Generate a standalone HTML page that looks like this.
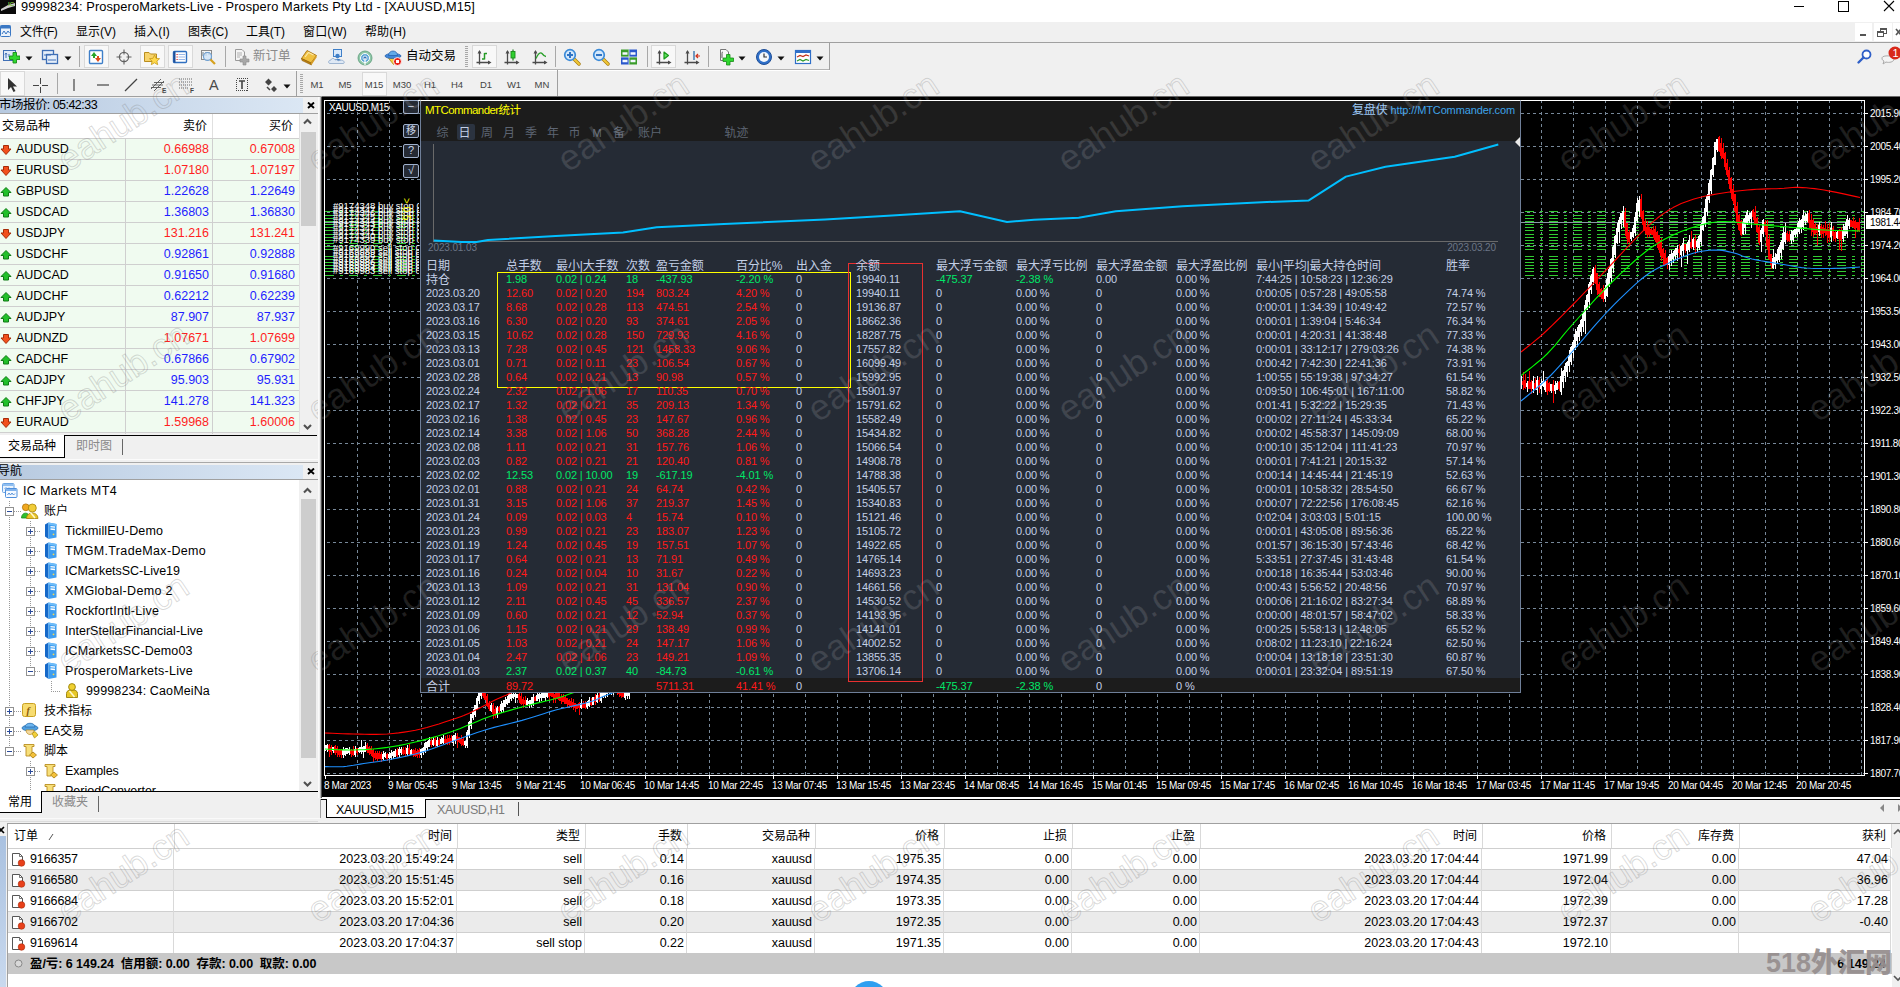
<!DOCTYPE html>
<html lang="zh-CN"><head><meta charset="utf-8"><title>MT4</title><style>
html,body{margin:0;padding:0;background:#f0f0f0;}
#root{position:relative;width:1900px;height:987px;overflow:hidden;background:#f0f0f0;font-family:"Liberation Sans","Noto Sans CJK SC",sans-serif;font-size:12px;}
.b{position:absolute;display:block;}
.t{position:absolute;white-space:pre;font-family:"Liberation Sans","Noto Sans CJK SC",sans-serif;font-size:12px;}
.ui{font-size:12.5px;}
.ar{font-size:11px;letter-spacing:-0.12px;}
.ax{font-size:10px;}
.wml,.wmd{font-size:36px;line-height:44px;width:160px;text-align:center;transform:rotate(-33.5deg);}
.wml{color:transparent;-webkit-text-stroke:1px rgba(120,120,120,0.28);}
.wmd{color:rgba(255,255,255,0.12);}
</style></head>
<body><div id="root">
<div class="b" style="left:0px;top:0px;width:1900px;height:22px;background:#fff"></div>
<svg class="b" style="left:0px;top:0px;" width="16" height="14" viewBox="0 0 16 14"><rect x="0" y="0" width="16" height="14" fill="#0a0a0a"/><path d="M1 9 L8 5 L15 3 L15 6 L8 8 L1 11Z" fill="#cfcfcf"/><text x="8" y="5.5" font-family="Liberation Sans,sans-serif" font-size="6" font-weight="bold" fill="#7fbf3f">IC</text></svg>
<div class="t ui" style="left:21px;top:-1px;font-size:12.8px;line-height:16px;color:#000;letter-spacing:0.12px;">99998234: ProsperoMarkets-Live - Prospero Markets Pty Ltd - [XAUUSD,M15]</div>
<svg class="b" style="left:1790px;top:0px;" width="110" height="14" viewBox="0 0 110 14"><path d="M4 6.5H14" stroke="#000" stroke-width="1"/><rect x="48.5" y="1.5" width="10" height="10" fill="none" stroke="#000" stroke-width="1"/><path d="M94 1L104 11M104 1L94 11" stroke="#000" stroke-width="1.1"/></svg>
<div class="b" style="left:0px;top:22px;width:1900px;height:20px;background:#f0f0f0"></div>
<svg class="b" style="left:0px;top:24px;" width="12" height="14" viewBox="0 0 12 14"><rect x="0.5" y="1.5" width="10" height="11" rx="1" fill="#eaf2fb" stroke="#3b78c4"/><rect x="0.5" y="1.5" width="10" height="3" fill="#3b78c4"/><path d="M2 10L4 7L6 10L8 7L9.5 9" fill="none" stroke="#3b78c4" stroke-width="1"/></svg>
<div class="t ui" style="left:20px;top:24px;font-size:12px;line-height:17px;color:#000;letter-spacing:-0.37px;">文件(F)</div>
<div class="t ui" style="left:76px;top:24px;font-size:12px;line-height:17px;color:#000;letter-spacing:0.00px;">显示(V)</div>
<div class="t ui" style="left:134px;top:24px;font-size:12px;line-height:17px;color:#000;letter-spacing:0.13px;">插入(I)</div>
<div class="t ui" style="left:188px;top:24px;font-size:12px;line-height:17px;color:#000;letter-spacing:-0.13px;">图表(C)</div>
<div class="t ui" style="left:246px;top:24px;font-size:12px;line-height:17px;color:#000;letter-spacing:-0.07px;">工具(T)</div>
<div class="t ui" style="left:303px;top:24px;font-size:12px;line-height:17px;color:#000;letter-spacing:0.13px;">窗口(W)</div>
<div class="t ui" style="left:365px;top:24px;font-size:12px;line-height:17px;color:#000;letter-spacing:0.07px;">帮助(H)</div>
<div class="b" style="left:1855px;top:23px;width:17px;height:18px;background:#fff"></div>
<div class="b" style="left:1874px;top:23px;width:18px;height:18px;background:#fff"></div>
<div class="b" style="left:1893px;top:23px;width:7px;height:18px;background:#fff"></div>
<svg class="b" style="left:1855px;top:23px;" width="45" height="18" viewBox="0 0 45 18"><rect x="5" y="11" width="6" height="2" fill="#555"/><rect x="25.5" y="5.5" width="6" height="5" fill="none" stroke="#555"/><rect x="25" y="5" width="7" height="2" fill="#555"/><rect x="22.500" y="8.5" width="6" height="5" fill="#fff" stroke="#555"/><rect x="22" y="8" width="7" height="2" fill="#555"/><path d="M41 6L46 12M46 6L41 12" stroke="#555" stroke-width="1.6"/></svg>
<div class="b" style="left:0px;top:42px;width:1900px;height:1px;background:#a0a0a0"></div>
<div class="b" style="left:0px;top:43px;width:1900px;height:54px;background:#f0f0f0"></div>
<div class="b" style="left:0px;top:69px;width:830px;height:1px;background:#b4b4b4"></div>
<div class="b" style="left:0px;top:70px;width:830px;height:1px;background:#fff"></div>
<div class="b" style="left:829px;top:43px;width:1px;height:27px;background:#a0a0a0"></div>
<div class="b" style="left:0px;top:96px;width:558px;height:1px;background:#a0a0a0"></div>
<div class="b" style="left:557px;top:70px;width:1px;height:27px;background:#a0a0a0"></div>
<div class="b" style="left:84px;top:45px;width:25px;height:23px;background:#f8f8f8;border:1px solid #d9d9d9;box-sizing:border-box;"></div>
<div class="b" style="left:140px;top:45px;width:25px;height:23px;background:#f8f8f8;border:1px solid #d9d9d9;box-sizing:border-box;"></div>
<div class="b" style="left:168px;top:45px;width:25px;height:23px;background:#f8f8f8;border:1px solid #d9d9d9;box-sizing:border-box;"></div>
<div class="b" style="left:472px;top:45px;width:25px;height:23px;background:#f8f8f8;border:1px solid #d9d9d9;box-sizing:border-box;"></div>
<div class="b" style="left:651px;top:45px;width:25px;height:23px;background:#f8f8f8;border:1px solid #d9d9d9;box-sizing:border-box;"></div>
<div class="b" style="left:79px;top:46px;width:1px;height:21px;background:#a8a8a8"></div>
<div class="b" style="left:225px;top:46px;width:1px;height:21px;background:#a8a8a8"></div>
<div class="b" style="left:555px;top:46px;width:1px;height:21px;background:#a8a8a8"></div>
<div class="b" style="left:647px;top:46px;width:1px;height:21px;background:#a8a8a8"></div>
<div class="b" style="left:708px;top:46px;width:1px;height:21px;background:#a8a8a8"></div>
<div class="b" style="left:465px;top:46px;width:3px;height:21px;background:repeating-linear-gradient(#a8a8a8 0 1px,#f0f0f0 1px 2px)"></div>
<svg class="b" style="left:25px;top:56px;" width="8" height="5" viewBox="0 0 8 5"><path d="M0.5 0.5H7.5L4 4.5Z" fill="#111"/></svg>
<svg class="b" style="left:64px;top:56px;" width="8" height="5" viewBox="0 0 8 5"><path d="M0.5 0.5H7.5L4 4.5Z" fill="#111"/></svg>
<svg class="b" style="left:738px;top:56px;" width="8" height="5" viewBox="0 0 8 5"><path d="M0.5 0.5H7.5L4 4.5Z" fill="#111"/></svg>
<svg class="b" style="left:777px;top:56px;" width="8" height="5" viewBox="0 0 8 5"><path d="M0.5 0.5H7.5L4 4.5Z" fill="#111"/></svg>
<svg class="b" style="left:816px;top:56px;" width="8" height="5" viewBox="0 0 8 5"><path d="M0.5 0.5H7.5L4 4.5Z" fill="#111"/></svg>
<svg class="b" style="left:2px;top:48px;" width="18" height="18" viewBox="0 0 18 18"><rect x="1.5" y="2.5" width="12" height="10" fill="#dfeaf8" stroke="#3f6fb5"/><path d="M4 10V5M4 5L3 6.500M4 5L5 6.500M7 9V6" stroke="#3f6fb5" fill="none"/><path d="M11 4.500H14.500V8H18V11.500H14.500V15H11V11.500H7.500V8H11Z" fill="#2fd82f" stroke="#168a16" stroke-width="0.9"/></svg>
<svg class="b" style="left:41px;top:48px;" width="18" height="18" viewBox="0 0 18 18"><rect x="1.5" y="2.5" width="11" height="9" fill="#e6effa" stroke="#3f6fb5" stroke-width="1.3"/><rect x="5.500" y="6.500" width="11" height="9" fill="#e6effa" stroke="#3f6fb5" stroke-width="1.3"/><path d="M3 7H10M7 12H15" stroke="#3f6fb5" stroke-width="1"/></svg>
<svg class="b" style="left:87px;top:48px;" width="18" height="18" viewBox="0 0 18 18"><rect x="2.500" y="2.500" width="13" height="13" rx="1" fill="#fff" stroke="#3f7fc8" stroke-width="1.4"/><path d="M7 4L10 8H8V10H6V8H4Z" fill="#2aa52a"/><path d="M11 14L8 10H10V8H12V10H14Z" fill="#e04a1a"/></svg>
<svg class="b" style="left:115px;top:48px;" width="18" height="18" viewBox="0 0 18 18"><circle cx="9" cy="9" r="4.600" fill="none" stroke="#606060" stroke-width="1.200"/><path d="M9 1.500V6.500M9 11.500V16.500M1.500 9H6.500M11.500 9H16.500" stroke="#606060" stroke-width="1.100"/></svg>
<svg class="b" style="left:143px;top:48px;" width="18" height="18" viewBox="0 0 18 18"><path d="M1.500 4.500H6L7.500 6H13.500V13.500H1.500Z" fill="#f7d36a" stroke="#b98d1f"/><path d="M11.500 7L13 10.300L16.600 10.700L13.900 13.100L14.700 16.700L11.500 14.800L8.300 16.700L9.100 13.100L6.400 10.700L10 10.300Z" fill="#ffd84a" stroke="#c79a1a" stroke-width="0.800"/></svg>
<svg class="b" style="left:171px;top:48px;" width="18" height="18" viewBox="0 0 18 18"><rect x="2.500" y="3.500" width="13" height="11" rx="1" fill="#fff" stroke="#2f6fc0" stroke-width="1.400"/><rect x="2.500" y="3.500" width="2" height="11" fill="#1f4f98"/><path d="M7.500 6.500H14M7.500 9H14M7.500 11.500H14" stroke="#9ab8e8" stroke-width="1"/><path d="M5.500 6.500h1.200M5.500 9h1.200M5.500 11.500h1.200" stroke="#e02020" stroke-width="1.200"/></svg>
<svg class="b" style="left:199px;top:48px;" width="18" height="18" viewBox="0 0 18 18"><rect x="2.500" y="2.500" width="10" height="9" fill="#f4f4f4" stroke="#8a8a8a"/><path d="M4 4V8M7 4V8M10 4V7" stroke="#6a7a8a"/><circle cx="8.500" cy="8.500" r="4" fill="#cfe3f7" fill-opacity="0.800" stroke="#6f9fd0" stroke-width="1.200"/><path d="M11.500 11.500L16 16" stroke="#d6a11e" stroke-width="2.200"/></svg>
<svg class="b" style="left:232px;top:48px;" width="18" height="18" viewBox="0 0 18 18"><path d="M3.500 1.500H10L12.500 4V12.500H3.500Z" fill="#f4f4f4" stroke="#9a9a9a"/><path d="M5 5H10M5 7H10M5 9H8" stroke="#b0b0b0"/><path d="M11 8H14V11H17V14H14V17H11V14H8V11H11Z" fill="#a8a8a8" stroke="#8a8a8a" stroke-width="0.600"/></svg>
<div class="t ui" style="left:253px;top:48px;color:#8a8a8a;line-height:17px;font-size:12.500px">新订单</div>
<svg class="b" style="left:300px;top:48px;" width="18" height="18" viewBox="0 0 18 18"><path d="M1.500 10.500L7 2.500L16.500 7.500L11 15Z" fill="#f0c040" stroke="#a8700c" stroke-width="0.900"/><path d="M1.500 10.500L11 15L11.500 17L2 12.500Z" fill="#c08410" stroke="#8a5a08" stroke-width="0.600"/><path d="M11 15L16.500 7.500L16.500 9.500L11.500 17Z" fill="#d89c20"/><path d="M5 9L8.500 4.500L13.500 7" fill="none" stroke="#fbe9a8" stroke-width="1.200"/></svg>
<svg class="b" style="left:328px;top:48px;" width="18" height="18" viewBox="0 0 18 18"><rect x="5.500" y="1.500" width="8" height="7" fill="#d9e9fb" stroke="#3f7fc8"/><circle cx="9.500" cy="8" r="2.200" fill="#3f7fc8"/><path d="M6 13C6 10 13 10 13 13Z" fill="#3f7fc8"/><path d="M2 15.500C0 15.500 0 12 3 12C3.500 10 6.500 10 7 12C9 11 10 12.500 10 13C12 11.500 16 12 16 14C17 15.500 15 15.500 15 15.500Z" fill="#dfe9f5" stroke="#8aa6c8" stroke-width="0.800"/></svg>
<svg class="b" style="left:356px;top:48px;" width="18" height="18" viewBox="0 0 18 18"><circle cx="9" cy="10" r="7" fill="#8fc7a8" stroke="#5a9a78" stroke-width="0.800"/><circle cx="9" cy="10" r="4.500" fill="#5fa7d8" stroke="#fff" stroke-width="1"/><circle cx="9" cy="10" r="2" fill="#2f6fb8" stroke="#fff" stroke-width="0.800"/><path d="M9 10V17" stroke="#fff" stroke-width="1.200"/></svg>
<svg class="b" style="left:384px;top:48px;" width="18" height="18" viewBox="0 0 18 18"><path d="M4 9.500H14L9.500 16.500Z" fill="#f4d040" stroke="#b08a10" stroke-width="0.800"/><ellipse cx="9" cy="8" rx="8" ry="2.600" fill="#3f86d8" stroke="#1f5aa8" stroke-width="0.700"/><path d="M4.500 7.500C4.500 1.500 13.500 1.500 13.500 7.500Z" fill="#62aae8" stroke="#1f5aa8" stroke-width="0.700"/><circle cx="13.500" cy="13.500" r="4" fill="#e8241a" stroke="#fff" stroke-width="0.900"/><rect x="12" y="12" width="3" height="3" fill="#fff"/></svg>
<div class="t ui" style="left:406px;top:48px;color:#000;line-height:17px;font-size:12.500px">自动交易</div>
<svg class="b" style="left:475px;top:48px;" width="18" height="18" viewBox="0 0 18 18"><path d="M4.500 3V16.500M1.500 14.500H15" fill="none" stroke="#4a4a4a" stroke-width="1.300"/><path d="M2.500 5.500L4.500 2L6.500 5.500Z M13 12.500L16.500 14.500L13 16.500Z" fill="#4a4a4a"/><path d="M9.500 5V11.500M9.500 5.500H12M7 11H9.500" fill="none" stroke="#259a25" stroke-width="1.500"/></svg>
<svg class="b" style="left:503px;top:48px;" width="18" height="18" viewBox="0 0 18 18"><path d="M4.500 3V16.500M1.500 14.500H15" fill="none" stroke="#4a4a4a" stroke-width="1.300"/><path d="M2.500 5.500L4.500 2L6.500 5.500Z M13 12.500L16.500 14.500L13 16.500Z" fill="#4a4a4a"/><path d="M10 1.500V12.500" stroke="#1a7a1a" stroke-width="1.200"/><rect x="8" y="3.500" width="4" height="6.500" fill="#2fd02f" stroke="#1a8a1a" stroke-width="0.900"/></svg>
<svg class="b" style="left:531px;top:48px;" width="18" height="18" viewBox="0 0 18 18"><path d="M4.500 3V16.500M1.500 14.500H15" fill="none" stroke="#4a4a4a" stroke-width="1.300"/><path d="M2.500 5.500L4.500 2L6.500 5.500Z M13 12.500L16.500 14.500L13 16.500Z" fill="#4a4a4a"/><path d="M5 10.500C7 6 9.500 3.500 11 5.500S13.500 8.500 15 8.500" fill="none" stroke="#2aa02a" stroke-width="1.300"/></svg>
<svg class="b" style="left:563px;top:48px;" width="18" height="18" viewBox="0 0 18 18"><path d="M11 11L16 16" stroke="#a87c10" stroke-width="3.400" stroke-linecap="round"/><path d="M11 11L16 16" stroke="#f0c838" stroke-width="2" stroke-linecap="round"/><circle cx="7" cy="7" r="5.300" fill="#d4e8fb" stroke="#3a8ad8" stroke-width="1.700"/><path d="M4 7H10 M7 4V10" stroke="#2f74c4" stroke-width="2"/></svg>
<svg class="b" style="left:592px;top:48px;" width="18" height="18" viewBox="0 0 18 18"><path d="M11 11L16 16" stroke="#a87c10" stroke-width="3.400" stroke-linecap="round"/><path d="M11 11L16 16" stroke="#f0c838" stroke-width="2" stroke-linecap="round"/><circle cx="7" cy="7" r="5.300" fill="#d4e8fb" stroke="#3a8ad8" stroke-width="1.700"/><path d="M4 7H10" stroke="#2f74c4" stroke-width="2"/></svg>
<svg class="b" style="left:620px;top:48px;" width="18" height="18" viewBox="0 0 18 18"><rect x="1" y="1.500" width="8" height="7.500" fill="#3a9c2a"/><rect x="9" y="1.500" width="8" height="7.500" fill="#2a58cc"/><rect x="1" y="9" width="8" height="7.500" fill="#2a58cc"/><rect x="9" y="9" width="8" height="7.500" fill="#3a9c2a"/><path d="M2.500 5.500H7.500M10.500 5.500H15.500M2.500 13H7.500M10.500 13H15.500" stroke="#f4f8ff" stroke-width="2.600"/><path d="M1 9H17M9 1.500V16.500" stroke="#e8eef8" stroke-width="0.800"/></svg>
<svg class="b" style="left:655px;top:48px;" width="18" height="18" viewBox="0 0 18 18"><path d="M4.500 3V16.500M1.500 14.500H15" fill="none" stroke="#4a4a4a" stroke-width="1.300"/><path d="M2.500 5.500L4.500 2L6.500 5.500Z M13 12.500L16.500 14.500L13 16.500Z" fill="#4a4a4a"/><path d="M9 4L13.500 7.500L9 11Z" fill="#5fe05f" stroke="#1a9a1a" stroke-width="1.200" stroke-linejoin="round"/></svg>
<svg class="b" style="left:683px;top:48px;" width="18" height="18" viewBox="0 0 18 18"><path d="M4.500 3V16.500M1.500 14.500H15" fill="none" stroke="#4a4a4a" stroke-width="1.300"/><path d="M2.500 5.500L4.500 2L6.500 5.500Z M13 12.500L16.500 14.500L13 16.500Z" fill="#4a4a4a"/><path d="M11 3V12" stroke="#2a6aa8" stroke-width="1.300"/><path d="M17 8H13M15 6L13 8L15 10" stroke="#d0301a" stroke-width="1.200" fill="none"/></svg>
<svg class="b" style="left:717px;top:48px;" width="18" height="18" viewBox="0 0 18 18"><path d="M3.500 1.500H9L11.500 4V12.500H3.500Z" fill="#f8f8f8" stroke="#777"/><path d="M6 4C5 4 5 5 5 6V10" fill="none" stroke="#555"/><path d="M9.500 6.500H13V10H16.500V13.500H13V17H9.500V13.500H6V10H9.500Z" fill="#2fd82f" stroke="#168a16" stroke-width="0.800"/></svg>
<svg class="b" style="left:755px;top:48px;" width="18" height="18" viewBox="0 0 18 18"><circle cx="9" cy="9" r="7.500" fill="#2f6fc8" stroke="#1f4f98"/><circle cx="9" cy="9" r="5" fill="#f4f8fc"/><path d="M9 5.500V9H12" stroke="#333" stroke-width="1.200" fill="none"/></svg>
<svg class="b" style="left:794px;top:48px;" width="18" height="18" viewBox="0 0 18 18"><rect x="1.500" y="2.500" width="15" height="13" fill="#fff" stroke="#2f6fc8" stroke-width="1.200"/><rect x="1.500" y="2.500" width="15" height="2.500" fill="#2f6fc8"/><path d="M3 9L6 7.500L9 8.500L12 7L15 8" fill="none" stroke="#c0301a" stroke-width="1.200"/><path d="M3 13L6 11.500L9 13L12 11.500L15 12.500" fill="none" stroke="#2a9a2a" stroke-width="1.200"/></svg>
<svg class="b" style="left:1856px;top:48px;" width="18" height="18" viewBox="0 0 18 18"><circle cx="10.500" cy="6.500" r="4" fill="#fff" stroke="#2f5fc8" stroke-width="1.800"/><path d="M7.500 9.500L2.500 14.500" stroke="#2f5fc8" stroke-width="2.400" stroke-linecap="round"/></svg>
<svg class="b" style="left:1880px;top:44px;" width="20" height="24" viewBox="0 0 20 24"><path d="M2 14C2 11 14 11 14 15C14 18 9 19 6 18L3 20L4 17C2.500 16.500 2 15.500 2 14Z" fill="#f4f4f4" stroke="#aaa"/><circle cx="15" cy="9" r="6.500" fill="#d8281a"/><text x="12.500" y="13" font-family="Liberation Sans,sans-serif" font-size="11" fill="#fff">1</text></svg>
<div class="b" style="left:0px;top:71px;width:25px;height:25px;background:#f8f8f8;border:1px solid #d9d9d9;box-sizing:border-box;"></div>
<div class="b" style="left:362px;top:72px;width:25px;height:24px;background:#f8f8f8;border:1px solid #d9d9d9;box-sizing:border-box;"></div>
<div class="b" style="left:57px;top:73px;width:1px;height:21px;background:#a8a8a8"></div>
<div class="b" style="left:296px;top:71px;width:1px;height:25px;background:#a0a0a0"></div>
<div class="b" style="left:300px;top:74px;width:3px;height:19px;background:repeating-linear-gradient(#a8a8a8 0 1px,#f0f0f0 1px 2px)"></div>
<svg class="b" style="left:3px;top:76px;" width="18" height="18" viewBox="0 0 18 18"><path d="M5 2V14L8 11L10.500 16L12.500 15L10 10.500H14Z" fill="#333"/></svg>
<svg class="b" style="left:31px;top:76px;" width="18" height="18" viewBox="0 0 18 18"><path d="M9.500 2V8M9.500 11V17M2 9.500H8M11 9.500H17" stroke="#444" stroke-width="1" shape-rendering="crispEdges"/></svg>
<svg class="b" style="left:65px;top:76px;" width="18" height="18" viewBox="0 0 18 18"><path d="M9 3V15" stroke="#444" stroke-width="1.200"/></svg>
<svg class="b" style="left:94px;top:76px;" width="18" height="18" viewBox="0 0 18 18"><path d="M3 9H15" stroke="#444" stroke-width="1.200"/></svg>
<svg class="b" style="left:122px;top:76px;" width="18" height="18" viewBox="0 0 18 18"><path d="M3 15L15 3" stroke="#444" stroke-width="1.200"/></svg>
<svg class="b" style="left:150px;top:76px;" width="18" height="18" viewBox="0 0 18 18"><path d="M1 13L11 3M4 15L14 5M2 9H13M4 6.500H14M1 11.500H11" stroke="#555" stroke-width="0.900"/><text x="12" y="17" font-family="Liberation Sans,sans-serif" font-size="6.500" font-weight="bold" fill="#444">E</text></svg>
<svg class="b" style="left:178px;top:76px;" width="18" height="18" viewBox="0 0 18 18"><path d="M1 3H14M1 6H14M1 9H14M1 12H11" stroke="#666" stroke-width="1" stroke-dasharray="1 1"/><text x="12" y="17" font-family="Liberation Sans,sans-serif" font-size="6.500" font-weight="bold" fill="#444">F</text></svg>
<div class="t" style="left:209px;top:76px;font-size:14.5px;line-height:18px;color:#4a4a4a">A</div>
<svg class="b" style="left:233px;top:76px;" width="18" height="18" viewBox="0 0 18 18"><rect x="3.500" y="2.500" width="11" height="12" fill="none" stroke="#444" stroke-dasharray="1 1" shape-rendering="crispEdges"/><path d="M6 5H12M9 5V13" stroke="#444" stroke-width="1.600"/></svg>
<svg class="b" style="left:262px;top:76px;" width="18" height="18" viewBox="0 0 18 18"><path d="M3 6L6.500 2.500L10 6L6.500 9.500Z M9 13L12 10L15 13L12 16Z" fill="#444"/><path d="M5 11L8 14" stroke="#444" stroke-width="1.500"/></svg>
<svg class="b" style="left:283px;top:84px;" width="8" height="5" viewBox="0 0 8 5"><path d="M0.500 0.500H7.500L4 4.500Z" fill="#111"/></svg>
<div class="t" style="left:302px;top:78px;width:30px;text-align:center;font-size:9.5px;line-height:14px;color:#444">M1</div>
<div class="t" style="left:330px;top:78px;width:30px;text-align:center;font-size:9.5px;line-height:14px;color:#444">M5</div>
<div class="t" style="left:359px;top:78px;width:30px;text-align:center;font-size:9.5px;line-height:14px;color:#444">M15</div>
<div class="t" style="left:387px;top:78px;width:30px;text-align:center;font-size:9.5px;line-height:14px;color:#444">M30</div>
<div class="t" style="left:415px;top:78px;width:30px;text-align:center;font-size:9.5px;line-height:14px;color:#444">H1</div>
<div class="t" style="left:442px;top:78px;width:30px;text-align:center;font-size:9.5px;line-height:14px;color:#444">H4</div>
<div class="t" style="left:471px;top:78px;width:30px;text-align:center;font-size:9.5px;line-height:14px;color:#444">D1</div>
<div class="t" style="left:499px;top:78px;width:30px;text-align:center;font-size:9.5px;line-height:14px;color:#444">W1</div>
<div class="t" style="left:527px;top:78px;width:30px;text-align:center;font-size:9.5px;line-height:14px;color:#444">MN</div>
<div class="b" style="left:0px;top:97px;width:322px;height:725px;background:#f0f0f0"></div>
<div class="b" style="left:0px;top:98px;width:303px;height:15px;background:linear-gradient(90deg,#b7c9df 0%,#c6d6e9 40%,#dbe7f4 100%)"></div>
<div class="t ui" style="left:-1px;top:97px;line-height:16px;color:#000;letter-spacing:-0.54px;">市场报价: 05:42:33</div>
<svg class="b" style="left:307px;top:102px;" width="8" height="7" viewBox="0 0 8 7"><path d="M1 0.500L7 6M7 0.500L1 6" stroke="#000" stroke-width="1.900"/></svg>
<div class="b" style="left:0px;top:113px;width:318px;height:1px;background:#a0a0a0"></div>
<div class="b" style="left:0px;top:114px;width:299px;height:320px;background:#fff"></div>
<div class="t ui" style="left:2px;top:118px;line-height:17px;color:#000;font-size:12px">交易品种</div>
<div class="t ui" style="left:126px;top:118px;width:81px;text-align:right;line-height:17px;color:#000;font-size:12px">卖价</div>
<div class="t ui" style="left:213px;top:118px;width:80px;text-align:right;line-height:17px;color:#000;font-size:12px">买价</div>
<div class="b" style="left:212px;top:114px;width:1px;height:24px;background:#e0e0e0"></div>
<div class="b" style="left:0px;top:138px;width:299px;height:296px;background:#f0fbf0"></div>
<div class="b" style="left:0px;top:138px;width:299px;height:1px;background:#cfcfcf"></div>
<svg class="b" style="left:0px;top:145px;" width="12" height="10" viewBox="0 0 12 10"><path d="M6 9.500L11 4H8.500V0.500H3.500V4H1Z" fill="#f2501c" stroke="#a62c08" stroke-width="1" stroke-linejoin="round"/></svg>
<div class="t ui" style="left:16px;top:140px;line-height:18px;color:#000">AUDUSD</div>
<div class="t ui" style="left:126px;top:140px;width:83px;text-align:right;line-height:18px;color:#ff1f1f">0.66988</div>
<div class="t ui" style="left:213px;top:140px;width:82px;text-align:right;line-height:18px;color:#ff1f1f">0.67008</div>
<div class="b" style="left:0px;top:159px;width:299px;height:1px;background:#cfcfcf"></div>
<svg class="b" style="left:0px;top:166px;" width="12" height="10" viewBox="0 0 12 10"><path d="M6 9.500L11 4H8.500V0.500H3.500V4H1Z" fill="#f2501c" stroke="#a62c08" stroke-width="1" stroke-linejoin="round"/></svg>
<div class="t ui" style="left:16px;top:161px;line-height:18px;color:#000">EURUSD</div>
<div class="t ui" style="left:126px;top:161px;width:83px;text-align:right;line-height:18px;color:#ff1f1f">1.07180</div>
<div class="t ui" style="left:213px;top:161px;width:82px;text-align:right;line-height:18px;color:#ff1f1f">1.07197</div>
<div class="b" style="left:0px;top:180px;width:299px;height:1px;background:#cfcfcf"></div>
<svg class="b" style="left:0px;top:187px;" width="12" height="10" viewBox="0 0 12 10"><path d="M6 0.500L11 5.500H8.500V9H3.500V5.500H1Z" fill="#22c02a" stroke="#0f7a14" stroke-width="1" stroke-linejoin="round"/></svg>
<div class="t ui" style="left:16px;top:182px;line-height:18px;color:#000">GBPUSD</div>
<div class="t ui" style="left:126px;top:182px;width:83px;text-align:right;line-height:18px;color:#1f1fff">1.22628</div>
<div class="t ui" style="left:213px;top:182px;width:82px;text-align:right;line-height:18px;color:#1f1fff">1.22649</div>
<div class="b" style="left:0px;top:201px;width:299px;height:1px;background:#cfcfcf"></div>
<svg class="b" style="left:0px;top:208px;" width="12" height="10" viewBox="0 0 12 10"><path d="M6 0.500L11 5.500H8.500V9H3.500V5.500H1Z" fill="#22c02a" stroke="#0f7a14" stroke-width="1" stroke-linejoin="round"/></svg>
<div class="t ui" style="left:16px;top:203px;line-height:18px;color:#000">USDCAD</div>
<div class="t ui" style="left:126px;top:203px;width:83px;text-align:right;line-height:18px;color:#1f1fff">1.36803</div>
<div class="t ui" style="left:213px;top:203px;width:82px;text-align:right;line-height:18px;color:#1f1fff">1.36830</div>
<div class="b" style="left:0px;top:222px;width:299px;height:1px;background:#cfcfcf"></div>
<svg class="b" style="left:0px;top:229px;" width="12" height="10" viewBox="0 0 12 10"><path d="M6 9.500L11 4H8.500V0.500H3.500V4H1Z" fill="#f2501c" stroke="#a62c08" stroke-width="1" stroke-linejoin="round"/></svg>
<div class="t ui" style="left:16px;top:224px;line-height:18px;color:#000">USDJPY</div>
<div class="t ui" style="left:126px;top:224px;width:83px;text-align:right;line-height:18px;color:#ff1f1f">131.216</div>
<div class="t ui" style="left:213px;top:224px;width:82px;text-align:right;line-height:18px;color:#ff1f1f">131.241</div>
<div class="b" style="left:0px;top:243px;width:299px;height:1px;background:#cfcfcf"></div>
<svg class="b" style="left:0px;top:250px;" width="12" height="10" viewBox="0 0 12 10"><path d="M6 0.500L11 5.500H8.500V9H3.500V5.500H1Z" fill="#22c02a" stroke="#0f7a14" stroke-width="1" stroke-linejoin="round"/></svg>
<div class="t ui" style="left:16px;top:245px;line-height:18px;color:#000">USDCHF</div>
<div class="t ui" style="left:126px;top:245px;width:83px;text-align:right;line-height:18px;color:#1f1fff">0.92861</div>
<div class="t ui" style="left:213px;top:245px;width:82px;text-align:right;line-height:18px;color:#1f1fff">0.92888</div>
<div class="b" style="left:0px;top:264px;width:299px;height:1px;background:#cfcfcf"></div>
<svg class="b" style="left:0px;top:271px;" width="12" height="10" viewBox="0 0 12 10"><path d="M6 0.500L11 5.500H8.500V9H3.500V5.500H1Z" fill="#22c02a" stroke="#0f7a14" stroke-width="1" stroke-linejoin="round"/></svg>
<div class="t ui" style="left:16px;top:266px;line-height:18px;color:#000">AUDCAD</div>
<div class="t ui" style="left:126px;top:266px;width:83px;text-align:right;line-height:18px;color:#1f1fff">0.91650</div>
<div class="t ui" style="left:213px;top:266px;width:82px;text-align:right;line-height:18px;color:#1f1fff">0.91680</div>
<div class="b" style="left:0px;top:285px;width:299px;height:1px;background:#cfcfcf"></div>
<svg class="b" style="left:0px;top:292px;" width="12" height="10" viewBox="0 0 12 10"><path d="M6 0.500L11 5.500H8.500V9H3.500V5.500H1Z" fill="#22c02a" stroke="#0f7a14" stroke-width="1" stroke-linejoin="round"/></svg>
<div class="t ui" style="left:16px;top:287px;line-height:18px;color:#000">AUDCHF</div>
<div class="t ui" style="left:126px;top:287px;width:83px;text-align:right;line-height:18px;color:#1f1fff">0.62212</div>
<div class="t ui" style="left:213px;top:287px;width:82px;text-align:right;line-height:18px;color:#1f1fff">0.62239</div>
<div class="b" style="left:0px;top:306px;width:299px;height:1px;background:#cfcfcf"></div>
<svg class="b" style="left:0px;top:313px;" width="12" height="10" viewBox="0 0 12 10"><path d="M6 0.500L11 5.500H8.500V9H3.500V5.500H1Z" fill="#22c02a" stroke="#0f7a14" stroke-width="1" stroke-linejoin="round"/></svg>
<div class="t ui" style="left:16px;top:308px;line-height:18px;color:#000">AUDJPY</div>
<div class="t ui" style="left:126px;top:308px;width:83px;text-align:right;line-height:18px;color:#1f1fff">87.907</div>
<div class="t ui" style="left:213px;top:308px;width:82px;text-align:right;line-height:18px;color:#1f1fff">87.937</div>
<div class="b" style="left:0px;top:327px;width:299px;height:1px;background:#cfcfcf"></div>
<svg class="b" style="left:0px;top:334px;" width="12" height="10" viewBox="0 0 12 10"><path d="M6 9.500L11 4H8.500V0.500H3.500V4H1Z" fill="#f2501c" stroke="#a62c08" stroke-width="1" stroke-linejoin="round"/></svg>
<div class="t ui" style="left:16px;top:329px;line-height:18px;color:#000">AUDNZD</div>
<div class="t ui" style="left:126px;top:329px;width:83px;text-align:right;line-height:18px;color:#ff1f1f">1.07671</div>
<div class="t ui" style="left:213px;top:329px;width:82px;text-align:right;line-height:18px;color:#ff1f1f">1.07699</div>
<div class="b" style="left:0px;top:348px;width:299px;height:1px;background:#cfcfcf"></div>
<svg class="b" style="left:0px;top:355px;" width="12" height="10" viewBox="0 0 12 10"><path d="M6 0.500L11 5.500H8.500V9H3.500V5.500H1Z" fill="#22c02a" stroke="#0f7a14" stroke-width="1" stroke-linejoin="round"/></svg>
<div class="t ui" style="left:16px;top:350px;line-height:18px;color:#000">CADCHF</div>
<div class="t ui" style="left:126px;top:350px;width:83px;text-align:right;line-height:18px;color:#1f1fff">0.67866</div>
<div class="t ui" style="left:213px;top:350px;width:82px;text-align:right;line-height:18px;color:#1f1fff">0.67902</div>
<div class="b" style="left:0px;top:369px;width:299px;height:1px;background:#cfcfcf"></div>
<svg class="b" style="left:0px;top:376px;" width="12" height="10" viewBox="0 0 12 10"><path d="M6 0.500L11 5.500H8.500V9H3.500V5.500H1Z" fill="#22c02a" stroke="#0f7a14" stroke-width="1" stroke-linejoin="round"/></svg>
<div class="t ui" style="left:16px;top:371px;line-height:18px;color:#000">CADJPY</div>
<div class="t ui" style="left:126px;top:371px;width:83px;text-align:right;line-height:18px;color:#1f1fff">95.903</div>
<div class="t ui" style="left:213px;top:371px;width:82px;text-align:right;line-height:18px;color:#1f1fff">95.931</div>
<div class="b" style="left:0px;top:390px;width:299px;height:1px;background:#cfcfcf"></div>
<svg class="b" style="left:0px;top:397px;" width="12" height="10" viewBox="0 0 12 10"><path d="M6 0.500L11 5.500H8.500V9H3.500V5.500H1Z" fill="#22c02a" stroke="#0f7a14" stroke-width="1" stroke-linejoin="round"/></svg>
<div class="t ui" style="left:16px;top:392px;line-height:18px;color:#000">CHFJPY</div>
<div class="t ui" style="left:126px;top:392px;width:83px;text-align:right;line-height:18px;color:#1f1fff">141.278</div>
<div class="t ui" style="left:213px;top:392px;width:82px;text-align:right;line-height:18px;color:#1f1fff">141.323</div>
<div class="b" style="left:0px;top:411px;width:299px;height:1px;background:#cfcfcf"></div>
<svg class="b" style="left:0px;top:418px;" width="12" height="10" viewBox="0 0 12 10"><path d="M6 9.500L11 4H8.500V0.500H3.500V4H1Z" fill="#f2501c" stroke="#a62c08" stroke-width="1" stroke-linejoin="round"/></svg>
<div class="t ui" style="left:16px;top:413px;line-height:18px;color:#000">EURAUD</div>
<div class="t ui" style="left:126px;top:413px;width:83px;text-align:right;line-height:18px;color:#ff1f1f">1.59968</div>
<div class="t ui" style="left:213px;top:413px;width:82px;text-align:right;line-height:18px;color:#ff1f1f">1.60006</div>
<div class="b" style="left:0px;top:432px;width:299px;height:1px;background:#cfcfcf"></div>
<div class="b" style="left:0px;top:433px;width:318px;height:2px;background:#f0f0f0"></div>
<div class="b" style="left:125px;top:138px;width:1px;height:296px;background:#cfcfcf"></div>
<div class="b" style="left:212px;top:138px;width:1px;height:296px;background:#cfcfcf"></div>
<div class="b" style="left:299px;top:114px;width:1px;height:320px;background:#e0e0e0"></div>
<div class="b" style="left:300px;top:114px;width:17px;height:320px;background:#f0f0f0"></div>
<div class="b" style="left:301px;top:132px;width:15px;height:94px;background:#cdcdcd"></div>
<svg class="b" style="left:303px;top:118px;" width="10" height="8" viewBox="0 0 10 8"><path d="M1 5.500L4.500 2L8 5.500" fill="none" stroke="#505050" stroke-width="2.100"/></svg>
<svg class="b" style="left:303px;top:423px;" width="10" height="8" viewBox="0 0 10 8"><path d="M1 2L4.500 5.500L8 2" fill="none" stroke="#505050" stroke-width="2.100"/></svg>
<div class="b" style="left:64px;top:435px;width:253px;height:1px;background:#000"></div>
<div class="b" style="left:0px;top:435px;width:65px;height:23px;background:#fff;border-right:1px solid #000;border-bottom:1px solid #000;box-sizing:border-box;"></div>
<div class="t ui" style="left:8px;top:438px;line-height:17px;color:#000;font-size:12px">交易品种</div>
<div class="t ui" style="left:76px;top:438px;line-height:17px;color:#8a8a8a;font-size:12px">即时图</div>
<div class="b" style="left:122px;top:439px;width:1px;height:16px;background:#666"></div>
<div class="b" style="left:0px;top:459px;width:318px;height:1px;background:#fbfbfb"></div>
<div class="b" style="left:0px;top:462px;width:320px;height:1px;background:#a8a8a8"></div>
<div class="b" style="left:0px;top:465px;width:303px;height:14px;background:linear-gradient(90deg,#b7c9df 0%,#c6d6e9 40%,#dbe7f4 100%)"></div>
<div class="t ui" style="left:-2px;top:463px;line-height:17px;color:#000;font-size:12px">导航</div>
<svg class="b" style="left:307px;top:468px;" width="8" height="7" viewBox="0 0 8 7"><path d="M1 0.500L7 6M7 0.500L1 6" stroke="#000" stroke-width="1.900"/></svg>
<div class="b" style="left:0px;top:479px;width:318px;height:1px;background:#a0a0a0"></div>
<div class="b" style="left:0px;top:480px;width:299px;height:312px;background:#fff;overflow:hidden"></div>
<div class="b" style="left:300px;top:481px;width:17px;height:311px;background:#f0f0f0"></div>
<div class="b" style="left:301px;top:499px;width:15px;height:259px;background:#cdcdcd"></div>
<svg class="b" style="left:303px;top:487px;" width="10" height="8" viewBox="0 0 10 8"><path d="M1 5.500L4.500 2L8 5.500" fill="none" stroke="#505050" stroke-width="2.100"/></svg>
<svg class="b" style="left:303px;top:780px;" width="10" height="8" viewBox="0 0 10 8"><path d="M1 2L4.500 5.500L8 2" fill="none" stroke="#505050" stroke-width="2.100"/></svg>
<div class="b" style="left:9px;top:501px;width:1px;height:252px;background:repeating-linear-gradient(180deg,#999 0 1px,transparent 1px 2px)"></div>
<div class="b" style="left:30px;top:521px;width:1px;height:150px;background:repeating-linear-gradient(180deg,#999 0 1px,transparent 1px 2px)"></div>
<div class="b" style="left:30px;top:761px;width:1px;height:31px;background:repeating-linear-gradient(180deg,#999 0 1px,transparent 1px 2px)"></div>
<div class="b" style="left:51px;top:681px;width:1px;height:11px;background:repeating-linear-gradient(180deg,#999 0 1px,transparent 1px 2px)"></div>
<div class="b" style="left:51px;top:691px;width:10px;height:1px;background:repeating-linear-gradient(90deg,#999 0 1px,transparent 1px 2px)"></div>
<svg class="b" style="left:2px;top:483px;" width="16" height="16" viewBox="0 0 16 16"><rect x="0.500" y="0.500" width="11.500" height="9" rx="1" fill="#eaf3fd" stroke="#6aa4e4"/><rect x="1" y="1" width="10.500" height="2" fill="#8fbef0"/><path d="M2.500 6L4 4.500L5.500 6L7 4.500" fill="none" stroke="#5a96dc" stroke-width="0.900"/><rect x="3.500" y="5.500" width="11.500" height="9" rx="1" fill="#f4f9ff" stroke="#4f8fdc"/><rect x="4" y="6" width="10.500" height="2" fill="#7fb2ec"/><path d="M5.500 12L7 10L8.500 12L10 10L11.500 12L13 10.500" fill="none" stroke="#4a8ad8" stroke-width="0.900"/></svg>
<div class="t ui" style="left:23px;top:482px;line-height:18px;color:#000;letter-spacing:0.36px;">IC Markets MT4</div>
<svg class="b" style="left:5px;top:507px;" width="9" height="9" viewBox="0 0 9 9"><rect x="0.500" y="0.500" width="8" height="8" fill="#fff" stroke="#919191"/><path d="M2 4.500H7" stroke="#2a4a9a"/></svg>
<div class="b" style="left:14px;top:511px;width:7px;height:1px;background:repeating-linear-gradient(90deg,#999 0 1px,transparent 1px 2px)"></div>
<svg class="b" style="left:21px;top:502px;" width="18" height="18" viewBox="0 0 18 18"><path d="M0.500 16C0.500 9.500 8.500 9.500 8.500 16Z" fill="#2fc02f" stroke="#168a16" stroke-width="0.800"/><circle cx="4.800" cy="5.300" r="3.400" fill="#f0a820" stroke="#b07208" stroke-width="0.800"/><path d="M5.500 16.500C5.500 9 17 9 17 16.500Z" fill="#e8c428" stroke="#a88408" stroke-width="0.800"/><path d="M9.500 10.500L14 16" stroke="#fff6c8" stroke-width="1.600"/><circle cx="11.300" cy="6" r="4" fill="#f0cc38" stroke="#a88408" stroke-width="0.800"/></svg>
<div class="t ui" style="left:44px;top:502px;line-height:18px;color:#000;font-size:12px">账户</div>
<svg class="b" style="left:26px;top:527px;" width="9" height="9" viewBox="0 0 9 9"><rect x="0.500" y="0.500" width="8" height="8" fill="#fff" stroke="#919191"/><path d="M2 4.500H7" stroke="#2a4a9a"/><path d="M4.500 2V7" stroke="#2a4a9a"/></svg>
<div class="b" style="left:35px;top:531px;width:6px;height:1px;background:repeating-linear-gradient(90deg,#999 0 1px,transparent 1px 2px)"></div>
<svg class="b" style="left:44px;top:522px;" width="14" height="18" viewBox="0 0 14 18"><path d="M1 2.500L4.500 0.500V17L1 14.500Z" fill="#1668c8"/><path d="M4.500 0.500L12.500 2V15.500L4.500 17Z" fill="#3d9df0"/><path d="M4.500 0.500L12.500 2V4L4.500 2.500Z" fill="#6fbcf8"/><path d="M6.500 4.600L11 5.200M6.500 7L11 7.500" stroke="#fff" stroke-width="1.300"/><circle cx="9.500" cy="12.300" r="0.900" fill="#ffd84a"/></svg>
<div class="t ui" style="left:65px;top:522px;line-height:18px;color:#000;letter-spacing:0.13px;">TickmillEU-Demo</div>
<svg class="b" style="left:26px;top:547px;" width="9" height="9" viewBox="0 0 9 9"><rect x="0.500" y="0.500" width="8" height="8" fill="#fff" stroke="#919191"/><path d="M2 4.500H7" stroke="#2a4a9a"/><path d="M4.500 2V7" stroke="#2a4a9a"/></svg>
<div class="b" style="left:35px;top:551px;width:6px;height:1px;background:repeating-linear-gradient(90deg,#999 0 1px,transparent 1px 2px)"></div>
<svg class="b" style="left:44px;top:542px;" width="14" height="18" viewBox="0 0 14 18"><path d="M1 2.500L4.500 0.500V17L1 14.500Z" fill="#1668c8"/><path d="M4.500 0.500L12.500 2V15.500L4.500 17Z" fill="#3d9df0"/><path d="M4.500 0.500L12.500 2V4L4.500 2.500Z" fill="#6fbcf8"/><path d="M6.500 4.600L11 5.200M6.500 7L11 7.500" stroke="#fff" stroke-width="1.300"/><circle cx="9.500" cy="12.300" r="0.900" fill="#ffd84a"/></svg>
<div class="t ui" style="left:65px;top:542px;line-height:18px;color:#000;letter-spacing:0.34px;">TMGM.TradeMax-Demo</div>
<svg class="b" style="left:26px;top:567px;" width="9" height="9" viewBox="0 0 9 9"><rect x="0.500" y="0.500" width="8" height="8" fill="#fff" stroke="#919191"/><path d="M2 4.500H7" stroke="#2a4a9a"/><path d="M4.500 2V7" stroke="#2a4a9a"/></svg>
<div class="b" style="left:35px;top:571px;width:6px;height:1px;background:repeating-linear-gradient(90deg,#999 0 1px,transparent 1px 2px)"></div>
<svg class="b" style="left:44px;top:562px;" width="14" height="18" viewBox="0 0 14 18"><path d="M1 2.500L4.500 0.500V17L1 14.500Z" fill="#1668c8"/><path d="M4.500 0.500L12.500 2V15.500L4.500 17Z" fill="#3d9df0"/><path d="M4.500 0.500L12.500 2V4L4.500 2.500Z" fill="#6fbcf8"/><path d="M6.500 4.600L11 5.200M6.500 7L11 7.500" stroke="#fff" stroke-width="1.300"/><circle cx="9.500" cy="12.300" r="0.900" fill="#ffd84a"/></svg>
<div class="t ui" style="left:65px;top:562px;line-height:18px;color:#000;letter-spacing:-0.02px;">ICMarketsSC-Live19</div>
<svg class="b" style="left:26px;top:587px;" width="9" height="9" viewBox="0 0 9 9"><rect x="0.500" y="0.500" width="8" height="8" fill="#fff" stroke="#919191"/><path d="M2 4.500H7" stroke="#2a4a9a"/><path d="M4.500 2V7" stroke="#2a4a9a"/></svg>
<div class="b" style="left:35px;top:591px;width:6px;height:1px;background:repeating-linear-gradient(90deg,#999 0 1px,transparent 1px 2px)"></div>
<svg class="b" style="left:44px;top:582px;" width="14" height="18" viewBox="0 0 14 18"><path d="M1 2.500L4.500 0.500V17L1 14.500Z" fill="#1668c8"/><path d="M4.500 0.500L12.500 2V15.500L4.500 17Z" fill="#3d9df0"/><path d="M4.500 0.500L12.500 2V4L4.500 2.500Z" fill="#6fbcf8"/><path d="M6.500 4.600L11 5.200M6.500 7L11 7.500" stroke="#fff" stroke-width="1.300"/><circle cx="9.500" cy="12.300" r="0.900" fill="#ffd84a"/></svg>
<div class="t ui" style="left:65px;top:582px;line-height:18px;color:#000;letter-spacing:0.34px;">XMGlobal-Demo 2</div>
<svg class="b" style="left:26px;top:607px;" width="9" height="9" viewBox="0 0 9 9"><rect x="0.500" y="0.500" width="8" height="8" fill="#fff" stroke="#919191"/><path d="M2 4.500H7" stroke="#2a4a9a"/><path d="M4.500 2V7" stroke="#2a4a9a"/></svg>
<div class="b" style="left:35px;top:611px;width:6px;height:1px;background:repeating-linear-gradient(90deg,#999 0 1px,transparent 1px 2px)"></div>
<svg class="b" style="left:44px;top:602px;" width="14" height="18" viewBox="0 0 14 18"><path d="M1 2.500L4.500 0.500V17L1 14.500Z" fill="#1668c8"/><path d="M4.500 0.500L12.500 2V15.500L4.500 17Z" fill="#3d9df0"/><path d="M4.500 0.500L12.500 2V4L4.500 2.500Z" fill="#6fbcf8"/><path d="M6.500 4.600L11 5.200M6.500 7L11 7.500" stroke="#fff" stroke-width="1.300"/><circle cx="9.500" cy="12.300" r="0.900" fill="#ffd84a"/></svg>
<div class="t ui" style="left:65px;top:602px;line-height:18px;color:#000;letter-spacing:0.22px;">RockfortIntl-Live</div>
<svg class="b" style="left:26px;top:627px;" width="9" height="9" viewBox="0 0 9 9"><rect x="0.500" y="0.500" width="8" height="8" fill="#fff" stroke="#919191"/><path d="M2 4.500H7" stroke="#2a4a9a"/><path d="M4.500 2V7" stroke="#2a4a9a"/></svg>
<div class="b" style="left:35px;top:631px;width:6px;height:1px;background:repeating-linear-gradient(90deg,#999 0 1px,transparent 1px 2px)"></div>
<svg class="b" style="left:44px;top:622px;" width="14" height="18" viewBox="0 0 14 18"><path d="M1 2.500L4.500 0.500V17L1 14.500Z" fill="#1668c8"/><path d="M4.500 0.500L12.500 2V15.500L4.500 17Z" fill="#3d9df0"/><path d="M4.500 0.500L12.500 2V4L4.500 2.500Z" fill="#6fbcf8"/><path d="M6.500 4.600L11 5.200M6.500 7L11 7.500" stroke="#fff" stroke-width="1.300"/><circle cx="9.500" cy="12.300" r="0.900" fill="#ffd84a"/></svg>
<div class="t ui" style="left:65px;top:622px;line-height:18px;color:#000;letter-spacing:0.02px;">InterStellarFinancial-Live</div>
<svg class="b" style="left:26px;top:647px;" width="9" height="9" viewBox="0 0 9 9"><rect x="0.500" y="0.500" width="8" height="8" fill="#fff" stroke="#919191"/><path d="M2 4.500H7" stroke="#2a4a9a"/><path d="M4.500 2V7" stroke="#2a4a9a"/></svg>
<div class="b" style="left:35px;top:651px;width:6px;height:1px;background:repeating-linear-gradient(90deg,#999 0 1px,transparent 1px 2px)"></div>
<svg class="b" style="left:44px;top:642px;" width="14" height="18" viewBox="0 0 14 18"><path d="M1 2.500L4.500 0.500V17L1 14.500Z" fill="#1668c8"/><path d="M4.500 0.500L12.500 2V15.500L4.500 17Z" fill="#3d9df0"/><path d="M4.500 0.500L12.500 2V4L4.500 2.500Z" fill="#6fbcf8"/><path d="M6.500 4.600L11 5.200M6.500 7L11 7.500" stroke="#fff" stroke-width="1.300"/><circle cx="9.500" cy="12.300" r="0.900" fill="#ffd84a"/></svg>
<div class="t ui" style="left:65px;top:642px;line-height:18px;color:#000;letter-spacing:0.10px;">ICMarketsSC-Demo03</div>
<svg class="b" style="left:26px;top:667px;" width="9" height="9" viewBox="0 0 9 9"><rect x="0.500" y="0.500" width="8" height="8" fill="#fff" stroke="#919191"/><path d="M2 4.500H7" stroke="#2a4a9a"/></svg>
<div class="b" style="left:35px;top:671px;width:6px;height:1px;background:repeating-linear-gradient(90deg,#999 0 1px,transparent 1px 2px)"></div>
<svg class="b" style="left:44px;top:662px;" width="14" height="18" viewBox="0 0 14 18"><path d="M1 2.500L4.500 0.500V17L1 14.500Z" fill="#1668c8"/><path d="M4.500 0.500L12.500 2V15.500L4.500 17Z" fill="#3d9df0"/><path d="M4.500 0.500L12.500 2V4L4.500 2.500Z" fill="#6fbcf8"/><path d="M6.500 4.600L11 5.200M6.500 7L11 7.500" stroke="#fff" stroke-width="1.300"/><circle cx="9.500" cy="12.300" r="0.900" fill="#ffd84a"/></svg>
<div class="t ui" style="left:65px;top:662px;line-height:18px;color:#000;letter-spacing:0.29px;">ProsperoMarkets-Live</div>
<svg class="b" style="left:65px;top:682px;" width="15" height="17" viewBox="0 0 15 17"><path d="M1.500 15.500V11.500C1.500 8.500 4 8 7 8S12.500 8.500 12.500 11.500V15.500Z" fill="#e8c828" stroke="#988008" stroke-width="0.900"/><path d="M4.500 9L9.500 15" stroke="#fff8d0" stroke-width="1.500"/><circle cx="7" cy="5" r="3.400" fill="#f0d030" stroke="#988008" stroke-width="0.900"/></svg>
<div class="t ui" style="left:86px;top:682px;line-height:18px;color:#000;letter-spacing:0.13px;">99998234: CaoMeiNa</div>
<svg class="b" style="left:5px;top:707px;" width="9" height="9" viewBox="0 0 9 9"><rect x="0.500" y="0.500" width="8" height="8" fill="#fff" stroke="#919191"/><path d="M2 4.500H7" stroke="#2a4a9a"/><path d="M4.500 2V7" stroke="#2a4a9a"/></svg>
<div class="b" style="left:14px;top:711px;width:7px;height:1px;background:repeating-linear-gradient(90deg,#999 0 1px,transparent 1px 2px)"></div>
<svg class="b" style="left:21px;top:702px;" width="16" height="16" viewBox="0 0 16 16"><rect x="1.500" y="1.500" width="13" height="13" rx="2" fill="#f7dc70" stroke="#c8a020"/><text x="5.500" y="11.500" font-family="Liberation Serif,serif" font-style="italic" font-weight="bold" font-size="10" fill="#8a5a08">f</text></svg>
<div class="t ui" style="left:44px;top:702px;line-height:18px;color:#000;font-size:12px">技术指标</div>
<svg class="b" style="left:5px;top:727px;" width="9" height="9" viewBox="0 0 9 9"><rect x="0.500" y="0.500" width="8" height="8" fill="#fff" stroke="#919191"/><path d="M2 4.500H7" stroke="#2a4a9a"/><path d="M4.500 2V7" stroke="#2a4a9a"/></svg>
<div class="b" style="left:14px;top:731px;width:7px;height:1px;background:repeating-linear-gradient(90deg,#999 0 1px,transparent 1px 2px)"></div>
<svg class="b" style="left:21px;top:722px;" width="18" height="17" viewBox="0 0 18 17"><ellipse cx="9" cy="6" rx="8" ry="3" fill="#4f9fe0" stroke="#2a6fb0" stroke-width="0.800"/><path d="M4 5C4 0 14 0 14 5Z" fill="#6fb7f0" stroke="#2a6fb0" stroke-width="0.800"/><path d="M5 8C5 14 13 14 13 8Z" fill="#f3d9a0" stroke="#b98d1f" stroke-width="0.700"/><path d="M11 11.500L14 9.500L17 13L13.500 16Z" fill="#f3d03a" stroke="#a8880c" stroke-width="0.700"/></svg>
<div class="t ui" style="left:44px;top:722px;line-height:18px;color:#000;font-size:12px">EA交易</div>
<svg class="b" style="left:5px;top:747px;" width="9" height="9" viewBox="0 0 9 9"><rect x="0.500" y="0.500" width="8" height="8" fill="#fff" stroke="#919191"/><path d="M2 4.500H7" stroke="#2a4a9a"/></svg>
<div class="b" style="left:14px;top:751px;width:7px;height:1px;background:repeating-linear-gradient(90deg,#999 0 1px,transparent 1px 2px)"></div>
<svg class="b" style="left:22px;top:743px;" width="16" height="16" viewBox="0 0 16 16"><path d="M2 1.500H12V3.500H10V11L8 13H4V3.500H2Z" fill="#f7df7a" stroke="#b98d1f" stroke-width="0.900"/><path d="M11 9L14.500 12L11 15L7.500 12Z" fill="#f3c13a" stroke="#a87a0c" stroke-width="0.800"/></svg>
<div class="t ui" style="left:44px;top:742px;line-height:18px;color:#000;font-size:12px">脚本</div>
<svg class="b" style="left:26px;top:767px;" width="9" height="9" viewBox="0 0 9 9"><rect x="0.500" y="0.500" width="8" height="8" fill="#fff" stroke="#919191"/><path d="M2 4.500H7" stroke="#2a4a9a"/><path d="M4.500 2V7" stroke="#2a4a9a"/></svg>
<div class="b" style="left:35px;top:771px;width:6px;height:1px;background:repeating-linear-gradient(90deg,#999 0 1px,transparent 1px 2px)"></div>
<svg class="b" style="left:43px;top:763px;" width="16" height="16" viewBox="0 0 16 16"><path d="M2 1.500H12V3.500H10V11L8 13H4V3.500H2Z" fill="#f7df7a" stroke="#b98d1f" stroke-width="0.900"/><path d="M11 9L14.500 12L11 15L7.500 12Z" fill="#f3c13a" stroke="#a87a0c" stroke-width="0.800"/></svg>
<div class="t ui" style="left:65px;top:762px;line-height:18px;color:#000;letter-spacing:-0.16px;">Examples</div>
<div class="b" style="left:0px;top:782px;width:299px;height:10px;overflow:hidden;background:transparent"><div class="t ui" style="left:65px;top:0px;line-height:18px;color:#000;">PeriodConverter</div><svg class="b" style="left:43px;top:1px" width="16" height="16" viewBox="0 0 16 16"><path d="M2 1.500H12V3.500H10V11H4V3.500H2Z" fill="#f7df7a" stroke="#b98d1f" stroke-width="0.900"/></svg></div>
<div class="b" style="left:41px;top:791px;width:277px;height:1px;background:#000"></div>
<div class="b" style="left:0px;top:791px;width:42px;height:22px;background:#fff;border-right:1px solid #000;border-bottom:1px solid #000;box-sizing:border-box;"></div>
<div class="t ui" style="left:8px;top:794px;line-height:17px;color:#000;font-size:12px">常用</div>
<div class="t ui" style="left:52px;top:794px;line-height:17px;color:#8a8a8a;font-size:12px">收藏夹</div>
<div class="b" style="left:98px;top:796px;width:1px;height:16px;background:#666"></div>
<div class="b" style="left:0px;top:821px;width:1900px;height:166px;background:#f0f0f0"></div>
<div class="b" style="left:0px;top:821px;width:1900px;height:1px;background:#dcdcdc"></div>
<div class="b" style="left:0px;top:836px;width:6px;height:151px;background:linear-gradient(180deg,#a9c1e0,#c9d9ee)"></div>
<svg class="b" style="left:-3px;top:826px;" width="8" height="8" viewBox="0 0 8 8"><path d="M1 1L7 7M7 1L1 7" stroke="#000" stroke-width="1.600"/></svg>
<div class="b" style="left:7px;top:823px;width:1893px;height:164px;background:#fff;border-left:1px solid #a0a0a0;border-top:1px solid #a0a0a0;box-sizing:border-box;"></div>
<div class="t ui" style="left:14px;top:828px;line-height:17px;color:#000;font-size:12px">订单</div>
<svg class="b" style="left:48px;top:833px;" width="6" height="8" viewBox="0 0 6 8"><path d="M1 7L5 1" stroke="#555" stroke-width="1"/></svg>
<div class="t ui" style="left:174px;top:828px;line-height:17px;color:#000;font-size:12px;width:278px;text-align:right">时间</div>
<div class="t ui" style="left:457px;top:828px;line-height:17px;color:#000;font-size:12px;width:123px;text-align:right">类型</div>
<div class="t ui" style="left:585px;top:828px;line-height:17px;color:#000;font-size:12px;width:97px;text-align:right">手数</div>
<div class="t ui" style="left:687px;top:828px;line-height:17px;color:#000;font-size:12px;width:123px;text-align:right">交易品种</div>
<div class="t ui" style="left:815px;top:828px;line-height:17px;color:#000;font-size:12px;width:124px;text-align:right">价格</div>
<div class="t ui" style="left:944px;top:828px;line-height:17px;color:#000;font-size:12px;width:123px;text-align:right">止损</div>
<div class="t ui" style="left:1072px;top:828px;line-height:17px;color:#000;font-size:12px;width:123px;text-align:right">止盈</div>
<div class="t ui" style="left:1200px;top:828px;line-height:17px;color:#000;font-size:12px;width:277px;text-align:right">时间</div>
<div class="t ui" style="left:1482px;top:828px;line-height:17px;color:#000;font-size:12px;width:124px;text-align:right">价格</div>
<div class="t ui" style="left:1611px;top:828px;line-height:17px;color:#000;font-size:12px;width:123px;text-align:right">库存费</div>
<div class="t ui" style="left:1739px;top:828px;line-height:17px;color:#000;font-size:12px;width:147px;text-align:right">获利</div>
<div class="b" style="left:8px;top:848px;width:1882px;height:1px;background:#cfcfcf"></div>
<svg class="b" style="left:11px;top:852px;" width="16" height="15" viewBox="0 0 16 15"><path d="M1.500 1.500H8.500L11.500 4.500V13.500H1.500Z" fill="#fff" stroke="#555" stroke-width="1"/><path d="M8.500 1.500V4.500H11.500" fill="none" stroke="#555" stroke-width="0.800"/><circle cx="10.500" cy="11" r="3.300" fill="#e8401a" stroke="#a82808" stroke-width="0.600"/></svg>
<div class="t ui" style="left:30px;top:850px;line-height:18px;color:#000;letter-spacing:-0.10px;">9166357</div>
<div class="t ui" style="left:174px;top:850px;line-height:18px;color:#000;width:280px;text-align:right">2023.03.20 15:49:24</div>
<div class="t ui" style="left:457px;top:850px;line-height:18px;color:#000;width:125px;text-align:right">sell</div>
<div class="t ui" style="left:585px;top:850px;line-height:18px;color:#000;width:99px;text-align:right">0.14</div>
<div class="t ui" style="left:687px;top:850px;line-height:18px;color:#000;width:125px;text-align:right">xauusd</div>
<div class="t ui" style="left:815px;top:850px;line-height:18px;color:#000;width:126px;text-align:right">1975.35</div>
<div class="t ui" style="left:944px;top:850px;line-height:18px;color:#000;width:125px;text-align:right">0.00</div>
<div class="t ui" style="left:1072px;top:850px;line-height:18px;color:#000;width:125px;text-align:right">0.00</div>
<div class="t ui" style="left:1200px;top:850px;line-height:18px;color:#000;width:279px;text-align:right">2023.03.20 17:04:44</div>
<div class="t ui" style="left:1482px;top:850px;line-height:18px;color:#000;width:126px;text-align:right">1971.99</div>
<div class="t ui" style="left:1611px;top:850px;line-height:18px;color:#000;width:125px;text-align:right">0.00</div>
<div class="t ui" style="left:1739px;top:850px;line-height:18px;color:#000;width:149px;text-align:right">47.04</div>
<div class="b" style="left:8px;top:869px;width:1883px;height:21px;background:#ebebeb"></div>
<div class="b" style="left:8px;top:869px;width:1882px;height:1px;background:#cfcfcf"></div>
<svg class="b" style="left:11px;top:873px;" width="16" height="15" viewBox="0 0 16 15"><path d="M1.500 1.500H8.500L11.500 4.500V13.500H1.500Z" fill="#fff" stroke="#555" stroke-width="1"/><path d="M8.500 1.500V4.500H11.500" fill="none" stroke="#555" stroke-width="0.800"/><circle cx="10.500" cy="11" r="3.300" fill="#e8401a" stroke="#a82808" stroke-width="0.600"/></svg>
<div class="t ui" style="left:30px;top:871px;line-height:18px;color:#000;letter-spacing:-0.10px;">9166580</div>
<div class="t ui" style="left:174px;top:871px;line-height:18px;color:#000;width:280px;text-align:right">2023.03.20 15:51:45</div>
<div class="t ui" style="left:457px;top:871px;line-height:18px;color:#000;width:125px;text-align:right">sell</div>
<div class="t ui" style="left:585px;top:871px;line-height:18px;color:#000;width:99px;text-align:right">0.16</div>
<div class="t ui" style="left:687px;top:871px;line-height:18px;color:#000;width:125px;text-align:right">xauusd</div>
<div class="t ui" style="left:815px;top:871px;line-height:18px;color:#000;width:126px;text-align:right">1974.35</div>
<div class="t ui" style="left:944px;top:871px;line-height:18px;color:#000;width:125px;text-align:right">0.00</div>
<div class="t ui" style="left:1072px;top:871px;line-height:18px;color:#000;width:125px;text-align:right">0.00</div>
<div class="t ui" style="left:1200px;top:871px;line-height:18px;color:#000;width:279px;text-align:right">2023.03.20 17:04:44</div>
<div class="t ui" style="left:1482px;top:871px;line-height:18px;color:#000;width:126px;text-align:right">1972.04</div>
<div class="t ui" style="left:1611px;top:871px;line-height:18px;color:#000;width:125px;text-align:right">0.00</div>
<div class="t ui" style="left:1739px;top:871px;line-height:18px;color:#000;width:149px;text-align:right">36.96</div>
<div class="b" style="left:8px;top:890px;width:1882px;height:1px;background:#cfcfcf"></div>
<svg class="b" style="left:11px;top:894px;" width="16" height="15" viewBox="0 0 16 15"><path d="M1.500 1.500H8.500L11.500 4.500V13.500H1.500Z" fill="#fff" stroke="#555" stroke-width="1"/><path d="M8.500 1.500V4.500H11.500" fill="none" stroke="#555" stroke-width="0.800"/><circle cx="10.500" cy="11" r="3.300" fill="#e8401a" stroke="#a82808" stroke-width="0.600"/></svg>
<div class="t ui" style="left:30px;top:892px;line-height:18px;color:#000;letter-spacing:-0.10px;">9166684</div>
<div class="t ui" style="left:174px;top:892px;line-height:18px;color:#000;width:280px;text-align:right">2023.03.20 15:52:01</div>
<div class="t ui" style="left:457px;top:892px;line-height:18px;color:#000;width:125px;text-align:right">sell</div>
<div class="t ui" style="left:585px;top:892px;line-height:18px;color:#000;width:99px;text-align:right">0.18</div>
<div class="t ui" style="left:687px;top:892px;line-height:18px;color:#000;width:125px;text-align:right">xauusd</div>
<div class="t ui" style="left:815px;top:892px;line-height:18px;color:#000;width:126px;text-align:right">1973.35</div>
<div class="t ui" style="left:944px;top:892px;line-height:18px;color:#000;width:125px;text-align:right">0.00</div>
<div class="t ui" style="left:1072px;top:892px;line-height:18px;color:#000;width:125px;text-align:right">0.00</div>
<div class="t ui" style="left:1200px;top:892px;line-height:18px;color:#000;width:279px;text-align:right">2023.03.20 17:04:44</div>
<div class="t ui" style="left:1482px;top:892px;line-height:18px;color:#000;width:126px;text-align:right">1972.39</div>
<div class="t ui" style="left:1611px;top:892px;line-height:18px;color:#000;width:125px;text-align:right">0.00</div>
<div class="t ui" style="left:1739px;top:892px;line-height:18px;color:#000;width:149px;text-align:right">17.28</div>
<div class="b" style="left:8px;top:911px;width:1883px;height:21px;background:#ebebeb"></div>
<div class="b" style="left:8px;top:911px;width:1882px;height:1px;background:#cfcfcf"></div>
<svg class="b" style="left:11px;top:915px;" width="16" height="15" viewBox="0 0 16 15"><path d="M1.500 1.500H8.500L11.500 4.500V13.500H1.500Z" fill="#fff" stroke="#555" stroke-width="1"/><path d="M8.500 1.500V4.500H11.500" fill="none" stroke="#555" stroke-width="0.800"/><circle cx="10.500" cy="11" r="3.300" fill="#e8401a" stroke="#a82808" stroke-width="0.600"/></svg>
<div class="t ui" style="left:30px;top:913px;line-height:18px;color:#000;letter-spacing:-0.10px;">9166702</div>
<div class="t ui" style="left:174px;top:913px;line-height:18px;color:#000;width:280px;text-align:right">2023.03.20 17:04:36</div>
<div class="t ui" style="left:457px;top:913px;line-height:18px;color:#000;width:125px;text-align:right">sell</div>
<div class="t ui" style="left:585px;top:913px;line-height:18px;color:#000;width:99px;text-align:right">0.20</div>
<div class="t ui" style="left:687px;top:913px;line-height:18px;color:#000;width:125px;text-align:right">xauusd</div>
<div class="t ui" style="left:815px;top:913px;line-height:18px;color:#000;width:126px;text-align:right">1972.35</div>
<div class="t ui" style="left:944px;top:913px;line-height:18px;color:#000;width:125px;text-align:right">0.00</div>
<div class="t ui" style="left:1072px;top:913px;line-height:18px;color:#000;width:125px;text-align:right">0.00</div>
<div class="t ui" style="left:1200px;top:913px;line-height:18px;color:#000;width:279px;text-align:right">2023.03.20 17:04:43</div>
<div class="t ui" style="left:1482px;top:913px;line-height:18px;color:#000;width:126px;text-align:right">1972.37</div>
<div class="t ui" style="left:1611px;top:913px;line-height:18px;color:#000;width:125px;text-align:right">0.00</div>
<div class="t ui" style="left:1739px;top:913px;line-height:18px;color:#000;width:149px;text-align:right">-0.40</div>
<div class="b" style="left:8px;top:932px;width:1882px;height:1px;background:#cfcfcf"></div>
<svg class="b" style="left:11px;top:936px;" width="16" height="15" viewBox="0 0 16 15"><path d="M1.500 1.500H8.500L11.500 4.500V13.500H1.500Z" fill="#fff" stroke="#555" stroke-width="1"/><path d="M8.500 1.500V4.500H11.500" fill="none" stroke="#555" stroke-width="0.800"/><circle cx="10.500" cy="11" r="3.300" fill="#e8401a" stroke="#a82808" stroke-width="0.600"/></svg>
<div class="t ui" style="left:30px;top:934px;line-height:18px;color:#000;letter-spacing:-0.10px;">9169614</div>
<div class="t ui" style="left:174px;top:934px;line-height:18px;color:#000;width:280px;text-align:right">2023.03.20 17:04:37</div>
<div class="t ui" style="left:457px;top:934px;line-height:18px;color:#000;width:125px;text-align:right">sell stop</div>
<div class="t ui" style="left:585px;top:934px;line-height:18px;color:#000;width:99px;text-align:right">0.22</div>
<div class="t ui" style="left:687px;top:934px;line-height:18px;color:#000;width:125px;text-align:right">xauusd</div>
<div class="t ui" style="left:815px;top:934px;line-height:18px;color:#000;width:126px;text-align:right">1971.35</div>
<div class="t ui" style="left:944px;top:934px;line-height:18px;color:#000;width:125px;text-align:right">0.00</div>
<div class="t ui" style="left:1072px;top:934px;line-height:18px;color:#000;width:125px;text-align:right">0.00</div>
<div class="t ui" style="left:1200px;top:934px;line-height:18px;color:#000;width:279px;text-align:right">2023.03.20 17:04:43</div>
<div class="t ui" style="left:1482px;top:934px;line-height:18px;color:#000;width:126px;text-align:right">1972.10</div>
<div class="t ui" style="left:1611px;top:934px;line-height:18px;color:#000;width:125px;text-align:right"></div>
<div class="t ui" style="left:1739px;top:934px;line-height:18px;color:#000;width:149px;text-align:right"></div>
<div class="b" style="left:8px;top:848px;width:1882px;height:1px;background:#cfcfcf"></div>
<div class="b" style="left:174px;top:824px;width:1px;height:24px;background:#d9d9d9"></div>
<div class="b" style="left:173px;top:849px;width:1px;height:104px;background:#d9d9d9"></div>
<div class="b" style="left:457px;top:824px;width:1px;height:24px;background:#d9d9d9"></div>
<div class="b" style="left:456px;top:849px;width:1px;height:104px;background:#d9d9d9"></div>
<div class="b" style="left:585px;top:824px;width:1px;height:24px;background:#d9d9d9"></div>
<div class="b" style="left:584px;top:849px;width:1px;height:104px;background:#d9d9d9"></div>
<div class="b" style="left:687px;top:824px;width:1px;height:24px;background:#d9d9d9"></div>
<div class="b" style="left:686px;top:849px;width:1px;height:104px;background:#d9d9d9"></div>
<div class="b" style="left:815px;top:824px;width:1px;height:24px;background:#d9d9d9"></div>
<div class="b" style="left:814px;top:849px;width:1px;height:104px;background:#d9d9d9"></div>
<div class="b" style="left:944px;top:824px;width:1px;height:24px;background:#d9d9d9"></div>
<div class="b" style="left:943px;top:849px;width:1px;height:104px;background:#d9d9d9"></div>
<div class="b" style="left:1072px;top:824px;width:1px;height:24px;background:#d9d9d9"></div>
<div class="b" style="left:1071px;top:849px;width:1px;height:104px;background:#d9d9d9"></div>
<div class="b" style="left:1200px;top:824px;width:1px;height:24px;background:#d9d9d9"></div>
<div class="b" style="left:1199px;top:849px;width:1px;height:104px;background:#d9d9d9"></div>
<div class="b" style="left:1482px;top:824px;width:1px;height:24px;background:#d9d9d9"></div>
<div class="b" style="left:1481px;top:849px;width:1px;height:104px;background:#d9d9d9"></div>
<div class="b" style="left:1611px;top:824px;width:1px;height:24px;background:#d9d9d9"></div>
<div class="b" style="left:1610px;top:849px;width:1px;height:104px;background:#d9d9d9"></div>
<div class="b" style="left:1739px;top:824px;width:1px;height:24px;background:#d9d9d9"></div>
<div class="b" style="left:1738px;top:849px;width:1px;height:104px;background:#d9d9d9"></div>
<div class="b" style="left:1891px;top:824px;width:1px;height:24px;background:#d9d9d9"></div>
<div class="b" style="left:1890px;top:849px;width:1px;height:104px;background:#d9d9d9"></div>
<div class="b" style="left:8px;top:953px;width:1884px;height:21px;background:#c8c8c8"></div>
<svg class="b" style="left:14px;top:959px;" width="9" height="9" viewBox="0 0 9 9"><circle cx="4.500" cy="4.500" r="3.500" fill="#d8d8d8" stroke="#888"/></svg>
<div class="t ui" style="left:30px;top:955px;font-size:12.5px;line-height:18px;color:#000;font-weight:bold;letter-spacing:-0.06px;">盈/亏: 6 149.24&nbsp; 信用额: 0.00&nbsp; 存款: 0.00&nbsp; 取款: 0.00</div>
<div class="t ui" style="left:1780px;top:955px;line-height:18px;color:#000;font-weight:bold;width:106px;text-align:right">6 149.24</div>
<div class="b" style="left:1892px;top:824px;width:8px;height:163px;background:#f0f0f0"></div>
<svg class="b" style="left:1893px;top:828px;" width="9" height="8" viewBox="0 0 9 8"><path d="M1 6L5 2L9 6" fill="none" stroke="#555" stroke-width="1.600"/></svg>
<svg class="b" style="left:1893px;top:974px;" width="9" height="8" viewBox="0 0 9 8"><path d="M1 2L5 6L9 2" fill="none" stroke="#555" stroke-width="1.600"/></svg>
<svg class="b" style="left:850px;top:978px;" width="40" height="10" viewBox="0 0 40 10"><circle cx="19" cy="22" r="19" fill="#2f9ff0"/></svg>
<div class="t" style="left:1766px;top:945px;font-size:27px;line-height:36px;color:#979090;font-weight:900;opacity:0.95;letter-spacing:-0.01px;">518外汇网</div>
<div class="t wml" style="left:43px;top:100px;">eahub.cn</div>
<div class="t wml" style="left:293px;top:100px;">eahub.cn</div>
<div class="t wml" style="left:543px;top:100px;">eahub.cn</div>
<div class="t wml" style="left:793px;top:100px;">eahub.cn</div>
<div class="t wml" style="left:1043px;top:100px;">eahub.cn</div>
<div class="t wml" style="left:1293px;top:100px;">eahub.cn</div>
<div class="t wml" style="left:1543px;top:100px;">eahub.cn</div>
<div class="t wml" style="left:1793px;top:100px;">eahub.cn</div>
<div class="t wml" style="left:43px;top:350px;">eahub.cn</div>
<div class="t wml" style="left:293px;top:350px;">eahub.cn</div>
<div class="t wml" style="left:543px;top:350px;">eahub.cn</div>
<div class="t wml" style="left:793px;top:350px;">eahub.cn</div>
<div class="t wml" style="left:1043px;top:350px;">eahub.cn</div>
<div class="t wml" style="left:1293px;top:350px;">eahub.cn</div>
<div class="t wml" style="left:1543px;top:350px;">eahub.cn</div>
<div class="t wml" style="left:1793px;top:350px;">eahub.cn</div>
<div class="t wml" style="left:43px;top:601px;">eahub.cn</div>
<div class="t wml" style="left:293px;top:601px;">eahub.cn</div>
<div class="t wml" style="left:543px;top:601px;">eahub.cn</div>
<div class="t wml" style="left:793px;top:601px;">eahub.cn</div>
<div class="t wml" style="left:1043px;top:601px;">eahub.cn</div>
<div class="t wml" style="left:1293px;top:601px;">eahub.cn</div>
<div class="t wml" style="left:1543px;top:601px;">eahub.cn</div>
<div class="t wml" style="left:1793px;top:601px;">eahub.cn</div>
<div class="t wml" style="left:43px;top:851px;">eahub.cn</div>
<div class="t wml" style="left:293px;top:851px;">eahub.cn</div>
<div class="t wml" style="left:543px;top:851px;">eahub.cn</div>
<div class="t wml" style="left:793px;top:851px;">eahub.cn</div>
<div class="t wml" style="left:1043px;top:851px;">eahub.cn</div>
<div class="t wml" style="left:1293px;top:851px;">eahub.cn</div>
<div class="t wml" style="left:1543px;top:851px;">eahub.cn</div>
<div class="t wml" style="left:1793px;top:851px;">eahub.cn</div>
<div class="b" style="left:322px;top:97px;width:1578px;height:700px;background:#000"></div>
<div class="b" style="left:322px;top:96px;width:1578px;height:1px;background:#6a6a6a"></div>
<div class="b" style="left:318px;top:97px;width:4px;height:725px;background:#f0f0f0"></div>
<div class="b" style="left:318px;top:97px;width:1px;height:701px;background:#fafafa"></div>
<div class="b" style="left:320px;top:97px;width:1px;height:701px;background:#b4b4b4"></div>
<div class="b" style="left:321px;top:97px;width:1px;height:701px;background:#4a4a4a"></div>
<svg class="b" style="left:0px;top:0px;pointer-events:none" width="1900" height="987" viewBox="0 0 1900 987"><path d="M357.5 101V775M389.5 101V775M421.5 101V775M453.5 101V775M485.5 101V775M517.5 101V775M549.5 101V775M581.5 101V775M613.5 101V775M645.5 101V775M677.5 101V775M709.5 101V775M741.5 101V775M773.5 101V775M805.5 101V775M837.5 101V775M869.5 101V775M901.5 101V775M933.5 101V775M965.5 101V775M997.5 101V775M1029.5 101V775M1061.5 101V775M1093.5 101V775M1125.5 101V775M1157.5 101V775M1189.5 101V775M1221.5 101V775M1253.5 101V775M1285.5 101V775M1317.5 101V775M1349.5 101V775M1381.5 101V775M1413.5 101V775M1445.5 101V775M1477.5 101V775M1509.5 101V775M1541.5 101V775M1573.5 101V775M1605.5 101V775M1637.5 101V775M1669.5 101V775M1701.5 101V775M1733.5 101V775M1765.5 101V775M1797.5 101V775M1829.5 101V775M1861.5 101V775" stroke="#778899" stroke-width="1" stroke-dasharray="3 3" stroke-dashoffset="1" fill="none" shape-rendering="crispEdges"/><path d="M325 113.5H1864M325 146.5H1864M325 179.5H1864M325 212.5H1864M325 245.5H1864M325 278.5H1864M325 311.5H1864M325 344.5H1864M325 377.5H1864M325 410.5H1864M325 443.5H1864M325 476.5H1864M325 509.5H1864M325 542.5H1864M325 575.5H1864M325 608.5H1864M325 641.5H1864M325 674.5H1864M325 707.5H1864M325 740.5H1864M325 773.5H1864" stroke="#778899" stroke-width="1" stroke-dasharray="3 3" stroke-dashoffset="4" fill="none" shape-rendering="crispEdges"/><path d="M325 211.5H1864M325 215.5H1864M325 218.5H1864M325 221.5H1864M325 224.5H1864M325 227.5H1864M325 230.5H1864M325 234.5H1864M325 237.5H1864M325 240.5H1864M325 243.5H1864M325 246.5H1864M325 249.5H1864M325 256.5H1864M325 259.5H1864M325 262.5H1864M325 265.5H1864M325 268.5H1864M325 271.5H1864M325 275.5H1864" stroke="#32cd32" stroke-width="1" stroke-dasharray="9 6 3 6" fill="none" shape-rendering="crispEdges"/><path d="M325 222.500H1864" stroke="#8896a6" stroke-width="1" shape-rendering="crispEdges"/><g shape-rendering="crispEdges"><path d="M1520 378.9h2V384.7h-2ZM1521 375.7h1V389.2h-1ZM1526 382.5h2V387.3h-2ZM1527 380.7h1V392.2h-1ZM1532 381.4h2V388.9h-2ZM1533 376.1h1V393.2h-1ZM1536 379.8h2V390.2h-2ZM1537 376.4h1V395.4h-1ZM1540 382.6h2V388.5h-2ZM1541 378.8h1V394.4h-1ZM1542 380.6h2V386.3h-2ZM1543 370.5h1V387.3h-1ZM1544 381.9h2V389.5h-2ZM1545 381.4h1V392.2h-1ZM1550 384.3h2V390.9h-2ZM1551 384.3h1V393.4h-1ZM1554 384.7h2V390.6h-2ZM1555 380.6h1V394.4h-1ZM1556 383.0h2V389.5h-2ZM1557 380.8h1V390.4h-1ZM1560 375.5h2V391.7h-2ZM1561 368.3h1V394.6h-1ZM1562 370.5h2V381.8h-2ZM1563 370.4h1V387.5h-1ZM1564 365.9h2V376.4h-2ZM1565 362.7h1V382.2h-1ZM1566 361.5h2V371.9h-2ZM1567 360.5h1V376.5h-1ZM1568 354.9h2V366.1h-2ZM1569 350.1h1V372.0h-1ZM1570 346.8h2V361.5h-2ZM1571 345.5h1V364.6h-1ZM1572 341.6h2V353.4h-2ZM1573 340.1h1V357.6h-1ZM1574 334.4h2V348.0h-2ZM1575 328.6h1V350.2h-1ZM1576 331.0h2V341.1h-2ZM1577 327.3h1V346.5h-1ZM1578 324.8h2V337.3h-2ZM1579 324.3h1V341.3h-1ZM1580 320.0h2V331.6h-2ZM1581 318.9h1V336.3h-1ZM1582 314.0h2V326.8h-2ZM1583 311.6h1V332.4h-1ZM1584 305.0h2V320.7h-2ZM1585 299.6h1V334.4h-1ZM1586 295.1h2V310.2h-2ZM1587 294.4h1V310.3h-1ZM1588 284.3h2V302.4h-2ZM1589 281.7h1V307.6h-1ZM1590 275.5h2V290.0h-2ZM1591 274.0h1V293.5h-1ZM1592 269.4h2V282.3h-2ZM1593 267.3h1V285.1h-1ZM1604 288.0h2V298.8h-2ZM1605 285.3h1V302.0h-1ZM1606 278.9h2V295.6h-2ZM1607 273.2h1V297.2h-1ZM1608 268.8h2V284.6h-2ZM1609 265.6h1V287.3h-1ZM1610 258.7h2V277.5h-2ZM1611 257.8h1V281.8h-1ZM1612 246.5h2V267.5h-2ZM1613 245.2h1V273.2h-1ZM1614 236.1h2V255.2h-2ZM1615 235.1h1V257.8h-1ZM1616 227.5h2V243.4h-2ZM1617 223.1h1V243.5h-1ZM1618 220.3h2V232.2h-2ZM1619 216.6h1V242.8h-1ZM1620 213.3h2V224.2h-2ZM1621 213.0h1V228.9h-1ZM1622 211.1h2V219.6h-2ZM1623 206.1h1V227.2h-1ZM1630 232.3h2V239.2h-2ZM1631 232.0h1V240.5h-1ZM1632 227.5h2V236.6h-2ZM1633 224.5h1V237.7h-1ZM1634 216.5h2V233.1h-2ZM1635 212.1h1V236.4h-1ZM1636 203.4h2V220.7h-2ZM1637 198.4h1V223.3h-1ZM1638 199.6h2V211.1h-2ZM1639 195.5h1V217.0h-1ZM1668 255.5h2V265.2h-2ZM1669 254.3h1V269.6h-1ZM1670 253.9h2V260.9h-2ZM1671 249.8h1V265.6h-1ZM1672 252.6h2V258.6h-2ZM1673 251.1h1V263.1h-1ZM1674 250.0h2V256.0h-2ZM1675 248.3h1V260.1h-1ZM1676 247.7h2V254.7h-2ZM1677 244.9h1V260.9h-1ZM1680 245.9h2V255.0h-2ZM1681 244.7h1V267.1h-1ZM1682 243.0h2V251.3h-2ZM1683 237.7h1V255.5h-1ZM1686 244.2h2V251.0h-2ZM1687 242.3h1V263.9h-1ZM1688 240.4h2V250.1h-2ZM1689 235.0h1V251.8h-1ZM1692 239.3h2V247.2h-2ZM1693 237.7h1V250.3h-1ZM1696 241.3h2V247.3h-2ZM1697 238.6h1V251.8h-1ZM1698 235.7h2V247.6h-2ZM1699 234.9h1V250.4h-1ZM1700 224.1h2V242.1h-2ZM1701 222.6h1V246.0h-1ZM1702 216.6h2V230.1h-2ZM1703 215.7h1V231.4h-1ZM1704 207.8h2V223.9h-2ZM1705 199.2h1V226.6h-1ZM1706 195.5h2V212.3h-2ZM1707 194.0h1V215.7h-1ZM1708 183.2h2V200.2h-2ZM1709 180.0h1V202.5h-1ZM1710 169.7h2V190.7h-2ZM1711 168.9h1V193.7h-1ZM1712 158.4h2V174.5h-2ZM1713 156.9h1V176.9h-1ZM1714 142.0h2V165.0h-2ZM1715 141.9h1V165.2h-1ZM1716 138.5h2V149.8h-2ZM1717 138.5h1V152.1h-1ZM1742 221.8h2V233.5h-2ZM1743 219.4h1V234.8h-1ZM1744 217.5h2V228.1h-2ZM1745 215.1h1V233.5h-1ZM1746 212.4h2V223.7h-2ZM1747 210.4h1V224.8h-1ZM1748 214.8h2V220.9h-2ZM1749 212.5h1V223.1h-1ZM1750 212.7h2V218.8h-2ZM1751 210.6h1V228.0h-1ZM1760 229.7h2V242.3h-2ZM1761 227.8h1V252.4h-1ZM1762 220.3h2V233.7h-2ZM1763 218.9h1V236.5h-1ZM1772 257.7h2V268.4h-2ZM1773 249.2h1V268.9h-1ZM1774 256.6h2V265.0h-2ZM1775 252.9h1V269.1h-1ZM1776 254.1h2V260.8h-2ZM1777 249.1h1V262.5h-1ZM1778 246.5h2V260.0h-2ZM1779 245.0h1V261.5h-1ZM1780 241.9h2V253.0h-2ZM1781 239.6h1V258.9h-1ZM1782 233.3h2V249.0h-2ZM1783 227.4h1V249.6h-1ZM1784 231.8h2V242.0h-2ZM1785 222.7h1V243.8h-1ZM1790 234.0h2V239.8h-2ZM1791 230.4h1V243.7h-1ZM1792 230.6h2V239.9h-2ZM1793 229.5h1V241.8h-1ZM1794 229.1h2V234.9h-2ZM1795 228.5h1V237.2h-1ZM1796 227.5h2V234.4h-2ZM1797 223.4h1V236.9h-1ZM1798 221.2h2V231.9h-2ZM1799 217.8h1V234.0h-1ZM1800 219.8h2V228.6h-2ZM1801 218.6h1V232.9h-1ZM1802 215.3h2V227.4h-2ZM1803 210.4h1V229.9h-1ZM1804 216.2h2V221.4h-2ZM1805 212.9h1V225.2h-1ZM1806 213.9h2V221.0h-2ZM1807 210.9h1V221.8h-1ZM1818 225.1h2V232.2h-2ZM1819 221.5h1V235.5h-1ZM1830 227.5h2V236.6h-2ZM1831 221.8h1V242.1h-1ZM1836 231.6h2V238.3h-2ZM1837 229.7h1V238.5h-1ZM1842 229.8h2V238.5h-2ZM1843 223.9h1V242.0h-1ZM1844 226.3h2V236.0h-2ZM1845 221.8h1V236.3h-1ZM1846 218.8h2V234.0h-2ZM1847 215.3h1V238.0h-1ZM1848 220.2h2V225.9h-2ZM1849 217.6h1V229.0h-1Z" fill="#fff"/><path d="M1522 380.8h2V385.3h-2ZM1523 371.9h1V390.3h-1ZM1524 380.1h2V388.2h-2ZM1525 374.2h1V388.5h-1ZM1528 380.9h2V388.6h-2ZM1529 370.8h1V389.0h-1ZM1530 382.2h2V388.9h-2ZM1531 380.4h1V393.6h-1ZM1534 382.9h2V389.0h-2ZM1535 378.4h1V389.9h-1ZM1538 380.0h2V388.1h-2ZM1539 377.3h1V393.1h-1ZM1546 380.9h2V392.1h-2ZM1547 379.2h1V394.6h-1ZM1548 383.1h2V390.5h-2ZM1549 382.0h1V391.9h-1ZM1552 383.7h2V390.9h-2ZM1553 380.0h1V402.5h-1ZM1558 382.1h2V388.9h-2ZM1559 380.6h1V391.0h-1ZM1594 268.4h2V280.5h-2ZM1595 265.4h1V283.7h-1ZM1596 273.0h2V289.9h-2ZM1597 273.0h1V294.7h-1ZM1598 284.0h2V294.3h-2ZM1599 282.0h1V297.4h-1ZM1600 289.1h2V297.0h-2ZM1601 287.6h1V298.7h-1ZM1602 290.3h2V299.0h-2ZM1603 284.9h1V301.7h-1ZM1624 212.1h2V226.7h-2ZM1625 208.0h1V235.7h-1ZM1626 223.2h2V239.2h-2ZM1627 222.8h1V244.4h-1ZM1628 231.6h2V241.8h-2ZM1629 230.0h1V242.5h-1ZM1640 198.6h2V216.6h-2ZM1641 193.7h1V218.7h-1ZM1642 210.6h2V225.3h-2ZM1643 210.1h1V230.4h-1ZM1644 220.9h2V231.3h-2ZM1645 219.1h1V234.1h-1ZM1646 226.7h2V234.5h-2ZM1647 220.8h1V237.7h-1ZM1648 227.3h2V235.0h-2ZM1649 227.3h1V237.3h-1ZM1650 229.1h2V234.0h-2ZM1651 227.5h1V234.5h-1ZM1652 230.0h2V234.9h-2ZM1653 226.4h1V238.1h-1ZM1654 228.8h2V239.8h-2ZM1655 226.4h1V241.7h-1ZM1656 231.5h2V242.9h-2ZM1657 231.2h1V247.9h-1ZM1658 235.4h2V249.8h-2ZM1659 234.5h1V252.9h-1ZM1660 241.4h2V255.5h-2ZM1661 237.9h1V260.8h-1ZM1662 249.0h2V257.6h-2ZM1663 248.2h1V265.7h-1ZM1664 252.5h2V264.8h-2ZM1665 249.5h1V264.8h-1ZM1666 257.8h2V264.9h-2ZM1667 257.4h1V269.4h-1ZM1678 248.6h2V253.4h-2ZM1679 243.7h1V259.2h-1ZM1684 244.1h2V250.0h-2ZM1685 244.1h1V252.9h-1ZM1690 241.5h2V247.7h-2ZM1691 231.0h1V249.3h-1ZM1694 238.9h2V248.1h-2ZM1695 235.1h1V253.5h-1ZM1718 137.2h2V151.2h-2ZM1719 135.7h1V151.9h-1ZM1720 142.7h2V155.5h-2ZM1721 138.4h1V159.4h-1ZM1722 147.6h2V157.5h-2ZM1723 142.9h1V158.9h-1ZM1724 153.4h2V166.6h-2ZM1725 151.9h1V170.4h-1ZM1726 162.9h2V174.9h-2ZM1727 159.4h1V177.2h-1ZM1728 170.1h2V183.6h-2ZM1729 167.3h1V189.3h-1ZM1730 178.0h2V192.8h-2ZM1731 176.5h1V198.5h-1ZM1732 188.9h2V201.4h-2ZM1733 184.9h1V203.9h-1ZM1734 193.7h2V210.5h-2ZM1735 193.5h1V212.5h-1ZM1736 206.1h2V221.6h-2ZM1737 201.7h1V224.6h-1ZM1738 214.9h2V229.8h-2ZM1739 213.5h1V231.2h-1ZM1740 221.0h2V234.6h-2ZM1741 219.9h1V236.0h-1ZM1752 209.7h2V217.2h-2ZM1753 209.4h1V220.0h-1ZM1754 211.8h2V224.2h-2ZM1755 206.4h1V224.4h-1ZM1756 217.5h2V232.1h-2ZM1757 217.2h1V232.5h-1ZM1758 226.5h2V242.9h-2ZM1759 224.5h1V244.5h-1ZM1764 222.1h2V231.6h-2ZM1765 219.6h1V234.5h-1ZM1766 225.1h2V245.7h-2ZM1767 220.2h1V250.3h-1ZM1768 239.2h2V259.1h-2ZM1769 234.5h1V259.6h-1ZM1770 254.1h2V265.3h-2ZM1771 253.9h1V268.6h-1ZM1786 233.3h2V240.4h-2ZM1787 230.6h1V242.0h-1ZM1788 234.2h2V241.0h-2ZM1789 230.5h1V242.3h-1ZM1808 212.9h2V223.2h-2ZM1809 210.0h1V228.1h-1ZM1810 219.5h2V228.1h-2ZM1811 213.6h1V235.7h-1ZM1812 219.9h2V232.3h-2ZM1813 219.0h1V237.0h-1ZM1814 223.8h2V234.0h-2ZM1815 222.7h1V235.3h-1ZM1816 227.9h2V232.6h-2ZM1817 223.5h1V245.3h-1ZM1820 226.4h2V233.6h-2ZM1821 223.9h1V237.6h-1ZM1822 226.7h2V233.9h-2ZM1823 225.2h1V238.4h-1ZM1824 227.7h2V233.0h-2ZM1825 221.3h1V235.6h-1ZM1826 229.0h2V235.1h-2ZM1827 224.3h1V242.8h-1ZM1828 228.8h2V237.8h-2ZM1829 222.8h1V242.2h-1ZM1832 227.7h2V236.0h-2ZM1833 225.6h1V240.5h-1ZM1834 231.9h2V239.3h-2ZM1835 231.0h1V242.3h-1ZM1838 230.3h2V239.1h-2ZM1839 229.3h1V250.3h-1ZM1840 230.3h2V239.5h-2ZM1841 226.8h1V251.2h-1ZM1850 220.0h2V226.6h-2ZM1851 219.8h1V226.6h-1ZM1852 220.7h2V226.8h-2ZM1853 217.2h1V228.0h-1ZM1854 221.4h2V229.3h-2ZM1855 219.9h1V238.3h-1ZM1856 221.9h2V228.3h-2ZM1857 221.8h1V232.2h-1ZM1858 222.4h2V230.5h-2ZM1859 218.0h1V232.0h-1Z" fill="#f00"/></g><g shape-rendering="crispEdges"><path d="M324 745.7h2V751.0h-2ZM325 744.9h1V751.2h-1ZM326 745.1h2V749.6h-2ZM327 744.4h1V751.7h-1ZM332 746.7h2V751.3h-2ZM333 746.6h1V752.5h-1ZM342 749.9h2V755.0h-2ZM343 746.9h1V757.5h-1ZM344 749.4h2V754.9h-2ZM345 748.4h1V755.6h-1ZM346 748.2h2V753.6h-2ZM347 748.1h1V753.9h-1ZM348 749.3h2V752.9h-2ZM349 746.9h1V755.1h-1ZM354 748.6h2V755.0h-2ZM355 745.8h1V757.2h-1ZM358 747.6h2V752.4h-2ZM359 746.7h1V753.4h-1ZM360 746.5h2V751.8h-2ZM361 740.1h1V753.9h-1ZM362 746.8h2V751.9h-2ZM363 746.1h1V757.5h-1ZM364 745.6h2V752.2h-2ZM365 742.1h1V752.2h-1ZM382 753.5h2V759.4h-2ZM383 750.6h1V760.0h-1ZM384 753.2h2V757.1h-2ZM385 752.1h1V757.8h-1ZM388 753.8h2V758.1h-2ZM389 751.6h1V758.5h-1ZM390 752.6h2V757.9h-2ZM391 749.8h1V760.3h-1ZM392 752.3h2V756.4h-2ZM393 750.9h1V759.0h-1ZM394 750.5h2V756.5h-2ZM395 749.0h1V757.3h-1ZM398 748.6h2V754.7h-2ZM399 747.2h1V757.4h-1ZM400 748.9h2V753.1h-2ZM401 746.7h1V754.5h-1ZM406 747.5h2V754.0h-2ZM407 745.0h1V755.8h-1ZM410 750.1h2V754.8h-2ZM411 748.9h1V755.0h-1ZM420 749.4h2V754.8h-2ZM421 749.0h1V757.7h-1ZM422 748.0h2V753.3h-2ZM423 747.1h1V754.8h-1ZM424 743.0h2V751.7h-2ZM425 742.1h1V752.8h-1ZM426 741.8h2V747.8h-2ZM427 740.5h1V751.0h-1ZM428 739.5h2V746.8h-2ZM429 736.8h1V747.3h-1ZM432 740.0h2V745.0h-2ZM433 737.3h1V746.3h-1ZM436 739.9h2V745.9h-2ZM437 737.0h1V746.6h-1ZM440 738.5h2V743.5h-2ZM441 736.8h1V744.0h-1ZM442 738.0h2V742.6h-2ZM443 735.1h1V744.3h-1ZM452 735.8h2V742.7h-2ZM453 734.8h1V745.6h-1ZM454 735.3h2V740.8h-2ZM455 733.1h1V743.6h-1ZM464 741.3h2V744.8h-2ZM465 741.2h1V747.6h-1ZM466 732.2h2V745.5h-2ZM467 729.5h1V747.5h-1ZM468 722.0h2V736.1h-2ZM469 720.5h1V738.4h-1ZM470 714.0h2V725.6h-2ZM471 713.6h1V728.5h-1ZM472 710.6h2V717.8h-2ZM473 709.3h1V719.8h-1ZM474 705.1h2V714.7h-2ZM475 704.8h1V717.0h-1ZM476 698.1h2V708.7h-2ZM477 695.7h1V709.2h-1ZM478 691.8h2V701.3h-2ZM479 691.7h1V703.8h-1ZM480 690.2h2V696.0h-2ZM481 687.5h1V698.5h-1ZM490 705.4h2V710.5h-2ZM491 703.2h1V711.9h-1ZM496 707.5h2V715.4h-2ZM497 706.2h1V717.8h-1ZM500 704.2h2V710.6h-2ZM501 701.3h1V713.4h-1ZM502 702.5h2V709.5h-2ZM503 699.7h1V711.9h-1ZM504 699.8h2V706.6h-2ZM505 697.0h1V707.3h-1ZM506 698.5h2V703.7h-2ZM507 696.1h1V705.4h-1ZM508 693.6h2V702.8h-2ZM509 692.0h1V703.1h-1ZM510 693.5h2V698.7h-2ZM511 690.5h1V700.6h-1ZM512 694.0h2V697.5h-2ZM513 691.6h1V698.8h-1ZM514 694.1h2V697.4h-2ZM515 690.6h1V703.2h-1ZM516 693.7h2V697.9h-2ZM517 693.6h1V698.1h-1ZM526 699.6h2V704.5h-2ZM527 698.1h1V705.1h-1ZM528 700.9h2V704.3h-2ZM529 699.7h1V707.5h-1ZM530 699.7h2V705.0h-2ZM531 697.2h1V707.3h-1ZM532 696.8h2V703.7h-2ZM533 693.5h1V706.1h-1ZM536 695.4h2V700.6h-2ZM537 693.0h1V700.7h-1ZM538 693.8h2V699.0h-2ZM539 690.6h1V702.0h-1ZM540 693.6h2V698.2h-2ZM541 690.4h1V701.1h-1ZM542 693.2h2V697.9h-2ZM543 691.0h1V698.4h-1ZM544 691.7h2V698.0h-2ZM545 691.2h1V701.1h-1ZM546 692.3h2V697.1h-2ZM547 691.1h1V697.7h-1ZM580 703.4h2V708.3h-2ZM581 699.2h1V709.3h-1ZM586 701.9h2V707.0h-2ZM587 700.7h1V708.6h-1ZM588 700.2h2V706.4h-2ZM589 697.3h1V706.6h-1ZM592 697.1h2V704.5h-2ZM593 697.0h1V705.0h-1ZM596 694.8h2V701.7h-2ZM597 692.4h1V702.7h-1ZM600 693.3h2V700.6h-2ZM601 692.8h1V702.7h-1ZM602 692.1h2V697.3h-2ZM603 687.3h1V697.8h-1ZM604 690.0h2V695.8h-2ZM605 689.7h1V697.7h-1ZM606 688.9h2V694.3h-2ZM607 688.2h1V696.8h-1ZM608 688.4h2V693.0h-2ZM609 687.6h1V693.8h-1ZM610 687.5h2V692.1h-2ZM611 686.3h1V695.1h-1ZM612 687.9h2V692.5h-2ZM613 686.8h1V695.2h-1ZM614 685.5h2V691.8h-2ZM615 685.3h1V693.2h-1ZM624 692.2h2V698.3h-2ZM625 690.2h1V699.7h-1ZM626 692.2h2V696.4h-2ZM627 690.6h1V699.0h-1ZM628 689.9h2V696.2h-2ZM629 688.8h1V698.9h-1Z" fill="#fff"/><path d="M328 745.3h2V751.1h-2ZM329 744.2h1V756.7h-1ZM330 746.7h2V752.0h-2ZM331 745.1h1V754.6h-1ZM334 745.7h2V752.7h-2ZM335 744.8h1V754.6h-1ZM336 748.1h2V753.4h-2ZM337 745.8h1V756.7h-1ZM338 750.0h2V754.6h-2ZM339 749.2h1V757.2h-1ZM340 750.1h2V754.8h-2ZM341 749.3h1V758.0h-1ZM350 749.8h2V754.4h-2ZM351 748.5h1V757.3h-1ZM352 749.5h2V755.1h-2ZM353 746.2h1V755.5h-1ZM356 748.3h2V752.5h-2ZM357 747.9h1V755.2h-1ZM366 744.8h2V751.3h-2ZM367 743.1h1V752.5h-1ZM368 746.9h2V752.5h-2ZM369 746.1h1V754.9h-1ZM370 748.3h2V753.5h-2ZM371 745.5h1V755.9h-1ZM372 749.9h2V756.9h-2ZM373 748.6h1V762.1h-1ZM374 753.0h2V758.2h-2ZM375 751.3h1V759.6h-1ZM376 753.4h2V758.5h-2ZM377 750.8h1V760.8h-1ZM378 753.4h2V758.5h-2ZM379 750.8h1V759.1h-1ZM380 753.8h2V758.7h-2ZM381 752.2h1V761.8h-1ZM386 753.8h2V759.1h-2ZM387 753.4h1V760.5h-1ZM396 750.3h2V755.7h-2ZM397 748.0h1V757.9h-1ZM402 749.3h2V754.1h-2ZM403 746.5h1V755.4h-1ZM404 749.5h2V753.5h-2ZM405 746.8h1V756.8h-1ZM408 747.6h2V754.1h-2ZM409 744.2h1V754.8h-1ZM412 750.3h2V754.6h-2ZM413 748.8h1V757.1h-1ZM414 750.1h2V755.8h-2ZM415 748.3h1V756.5h-1ZM416 751.4h2V755.7h-2ZM417 748.5h1V758.0h-1ZM418 749.8h2V755.2h-2ZM419 747.6h1V758.0h-1ZM430 740.6h2V744.8h-2ZM431 737.2h1V747.0h-1ZM434 739.2h2V745.1h-2ZM435 736.1h1V747.3h-1ZM438 739.8h2V745.2h-2ZM439 737.9h1V746.1h-1ZM444 739.1h2V743.2h-2ZM445 735.8h1V743.5h-1ZM446 738.5h2V743.6h-2ZM447 735.2h1V744.7h-1ZM448 737.5h2V742.3h-2ZM449 735.0h1V744.5h-1ZM450 738.0h2V742.3h-2ZM451 735.3h1V743.1h-1ZM456 735.6h2V740.6h-2ZM457 733.4h1V748.3h-1ZM458 736.8h2V742.2h-2ZM459 736.8h1V742.8h-1ZM460 737.9h2V744.3h-2ZM461 734.7h1V746.4h-1ZM462 739.3h2V745.4h-2ZM463 737.0h1V746.1h-1ZM482 690.4h2V696.2h-2ZM483 687.9h1V697.8h-1ZM484 691.1h2V700.2h-2ZM485 691.1h1V700.3h-1ZM486 696.2h2V706.1h-2ZM487 693.6h1V706.7h-1ZM488 702.6h2V709.4h-2ZM489 700.6h1V710.9h-1ZM492 705.4h2V713.7h-2ZM493 703.4h1V719.0h-1ZM494 709.2h2V715.1h-2ZM495 705.8h1V718.0h-1ZM498 707.2h2V711.1h-2ZM499 706.3h1V712.6h-1ZM518 693.5h2V700.3h-2ZM519 692.6h1V703.1h-1ZM520 695.6h2V703.6h-2ZM521 689.6h1V704.5h-1ZM522 698.8h2V704.3h-2ZM523 697.2h1V707.6h-1ZM524 699.6h2V703.6h-2ZM525 696.3h1V704.5h-1ZM534 696.9h2V700.9h-2ZM535 696.0h1V701.3h-1ZM548 692.2h2V697.3h-2ZM549 692.0h1V700.4h-1ZM550 691.2h2V695.6h-2ZM551 690.5h1V696.9h-1ZM552 690.4h2V696.7h-2ZM553 689.4h1V702.8h-1ZM554 693.6h2V698.9h-2ZM555 692.4h1V703.1h-1ZM556 693.0h2V698.1h-2ZM557 691.0h1V698.6h-1ZM558 693.3h2V700.2h-2ZM559 693.0h1V700.5h-1ZM560 696.6h2V701.3h-2ZM561 694.2h1V704.2h-1ZM562 696.6h2V701.6h-2ZM563 694.0h1V701.8h-1ZM564 697.0h2V703.7h-2ZM565 695.3h1V703.8h-1ZM566 698.4h2V704.4h-2ZM567 697.8h1V707.3h-1ZM568 700.3h2V704.5h-2ZM569 698.5h1V706.1h-1ZM570 700.6h2V706.7h-2ZM571 697.6h1V707.8h-1ZM572 701.6h2V706.8h-2ZM573 698.6h1V710.1h-1ZM574 703.0h2V708.2h-2ZM575 702.9h1V711.6h-1ZM576 703.9h2V708.6h-2ZM577 703.8h1V708.9h-1ZM578 703.4h2V708.4h-2ZM579 701.6h1V715.2h-1ZM582 703.4h2V707.6h-2ZM583 700.8h1V708.2h-1ZM584 703.2h2V708.0h-2ZM585 701.3h1V709.4h-1ZM590 700.5h2V705.0h-2ZM591 698.3h1V706.3h-1ZM594 696.5h2V702.2h-2ZM595 693.6h1V705.3h-1ZM598 694.8h2V700.1h-2ZM599 693.0h1V701.6h-1ZM616 686.5h2V692.2h-2ZM617 683.2h1V694.8h-1ZM618 688.5h2V693.6h-2ZM619 686.3h1V696.5h-1ZM620 688.7h2V695.8h-2ZM621 686.1h1V697.5h-1ZM622 690.6h2V697.2h-2ZM623 687.6h1V697.2h-1Z" fill="#f00"/></g><polyline points="1521.0,352.0 1523.3,350.2 1526.4,347.7 1530.2,344.8 1534.3,341.4 1538.7,337.8 1543.0,334.0 1547.3,330.0 1551.9,325.6 1556.6,321.0 1561.6,316.1 1566.7,310.9 1572.0,305.5 1577.6,299.8 1583.5,293.7 1589.6,287.3 1595.7,280.9 1601.9,274.4 1608.0,268.0 1614.1,261.5 1620.4,254.7 1626.7,247.9 1632.8,241.4 1638.6,235.3 1644.0,230.0 1648.8,225.5 1653.1,221.7 1657.2,218.3 1661.1,215.3 1665.0,212.6 1669.0,210.0 1673.1,207.6 1677.2,205.5 1681.2,203.6 1685.4,202.0 1689.6,200.4 1694.0,199.0 1698.6,197.7 1703.4,196.5 1708.2,195.5 1713.2,194.6 1718.1,193.8 1723.0,193.0 1727.8,192.3 1732.7,191.6 1737.5,191.0 1742.4,190.5 1747.2,190.0 1752.0,189.6 1756.9,189.3 1762.0,189.1 1767.0,188.9 1771.9,188.8 1776.5,188.7 1780.6,188.5 1784.1,188.3 1787.1,188.0 1789.8,187.7 1792.4,187.5 1795.3,187.4 1798.6,187.4 1802.3,187.6 1806.1,187.8 1810.2,188.2 1814.5,188.6 1819.1,189.2 1824.0,190.0 1829.8,191.1 1836.5,192.4 1843.6,193.9 1850.3,195.4 1856.0,196.6 1860.0,197.5" fill="none" stroke="#ff0000" stroke-width="1.1" stroke-linejoin="round"/><polyline points="1521.0,375.6 1523.8,373.3 1527.8,370.3 1532.4,366.6 1537.4,362.5 1542.4,358.3 1547.0,354.0 1551.1,349.7 1555.0,345.3 1558.9,340.6 1562.9,335.7 1567.2,330.5 1572.0,325.0 1577.4,319.0 1583.2,312.5 1589.3,305.8 1595.6,298.9 1601.9,292.3 1608.0,286.0 1614.1,280.0 1620.4,273.9 1626.7,268.1 1632.8,262.5 1638.6,257.4 1644.0,253.0 1648.8,249.3 1653.1,246.2 1657.2,243.6 1661.1,241.3 1665.0,239.1 1669.0,237.0 1673.2,234.9 1677.4,233.0 1681.7,231.3 1685.9,229.7 1690.0,228.3 1694.0,227.0 1697.9,225.8 1701.7,224.8 1705.4,223.9 1709.1,223.1 1712.6,222.5 1716.0,222.0 1719.2,221.7 1722.3,221.6 1725.2,221.6 1728.1,221.7 1731.0,221.8 1734.0,222.0 1736.8,222.2 1739.3,222.5 1741.9,222.8 1744.7,223.2 1748.0,223.6 1752.0,224.0 1757.0,224.4 1762.7,224.9 1768.9,225.4 1775.3,226.0 1781.8,226.5 1788.0,227.0 1794.0,227.5 1800.0,228.1 1806.0,228.6 1812.0,229.1 1818.0,229.6 1824.0,230.0 1830.4,230.3 1837.3,230.5 1844.2,230.7 1850.7,230.8 1856.1,230.9 1860.0,231.0" fill="none" stroke="#00ff00" stroke-width="1.1" stroke-linejoin="round"/><polyline points="1521.0,401.0 1523.8,398.7 1527.8,395.5 1532.4,391.7 1537.4,387.5 1542.4,383.2 1547.0,379.0 1551.1,375.0 1555.0,370.9 1558.9,366.7 1562.9,362.2 1567.2,357.4 1572.0,352.0 1577.4,345.9 1583.2,339.1 1589.3,331.9 1595.6,324.7 1601.9,317.6 1608.0,311.0 1614.1,304.7 1620.4,298.4 1626.7,292.3 1632.8,286.6 1638.6,281.4 1644.0,277.0 1648.8,273.5 1653.1,270.7 1657.2,268.5 1661.1,266.6 1665.0,264.9 1669.0,263.0 1673.2,261.0 1677.4,259.1 1681.7,257.3 1685.9,255.7 1690.0,254.2 1694.0,253.0 1697.9,252.0 1701.7,251.3 1705.4,250.7 1709.1,250.3 1712.6,250.1 1716.0,250.0 1719.2,250.1 1722.3,250.4 1725.2,250.9 1728.1,251.6 1731.0,252.3 1734.0,253.0 1736.9,253.8 1739.6,254.8 1742.3,255.9 1745.2,257.0 1748.4,258.0 1752.0,259.0 1756.2,259.9 1760.9,260.8 1765.8,261.6 1770.9,262.4 1775.9,263.2 1780.6,264.0 1785.0,264.8 1789.2,265.5 1793.3,266.3 1797.4,267.0 1801.6,267.6 1806.0,268.0 1810.6,268.3 1815.4,268.5 1820.2,268.5 1825.1,268.5 1829.9,268.5 1834.5,268.4 1839.2,268.3 1844.2,268.0 1849.0,267.7 1853.5,267.4 1857.3,267.2 1860.0,267.0" fill="none" stroke="#1e90ff" stroke-width="1.1" stroke-linejoin="round"/><polyline points="325.0,733.0 328.1,733.1 332.3,733.3 337.2,733.5 342.7,733.7 348.3,733.9 353.7,734.0 359.0,734.1 364.6,734.3 370.2,734.4 376.0,734.4 381.7,734.3 387.4,734.0 393.0,733.5 398.6,732.9 404.2,732.1 409.8,731.2 415.4,730.2 421.0,729.0 426.8,727.5 432.8,725.8 438.9,724.0 444.7,722.1 450.1,720.3 454.7,718.7 458.4,717.4 461.3,716.4 463.8,715.5 466.1,714.5 468.6,713.4 471.6,712.0 475.2,710.2 479.3,708.2 483.5,706.0 487.7,703.8 491.6,701.7 495.0,700.0 497.7,698.7 500.0,697.7 501.9,696.9 503.9,696.1 506.0,695.2 508.6,694.0 512.0,692.4 515.9,690.6 520.2,688.6 524.2,686.7 527.6,685.1 530.0,684.0" fill="none" stroke="#ff0000" stroke-width="1.1" stroke-linejoin="round"/><polyline points="325.0,749.0 328.1,749.2 332.3,749.4 337.2,749.7 342.7,749.9 348.3,750.0 353.7,750.0 359.0,749.8 364.6,749.6 370.2,749.2 376.0,748.7 381.7,748.1 387.4,747.4 393.0,746.5 398.6,745.6 404.2,744.5 409.8,743.3 415.4,742.0 421.0,740.6 426.6,739.1 432.2,737.6 437.8,736.0 443.5,734.2 449.1,732.4 454.7,730.5 460.3,728.4 465.9,726.1 471.6,723.7 477.2,721.4 482.8,719.1 488.4,717.0 494.0,715.1 499.6,713.4 505.2,711.7 510.8,710.1 516.4,708.5 522.0,707.0 527.8,705.5 533.9,703.9 540.1,702.4 545.9,701.0 551.2,699.7 555.8,698.5 559.2,697.5 561.7,696.7 563.7,696.1 565.6,695.4 567.9,694.6 571.0,693.5 575.4,692.1 580.7,690.3 586.5,688.4 592.0,686.6 596.7,685.1 600.0,684.0" fill="none" stroke="#00ff00" stroke-width="1.1" stroke-linejoin="round"/><polyline points="325.0,766.6 327.0,766.6 329.8,766.7 333.0,766.8 336.6,766.8 340.2,766.8 343.6,766.6 346.8,766.3 350.1,765.8 353.4,765.3 356.8,764.7 360.2,764.1 363.8,763.5 367.4,763.0 371.0,762.5 374.8,762.0 378.7,761.5 382.8,760.8 387.4,760.0 392.4,759.0 397.9,757.9 403.6,756.7 409.4,755.4 415.3,754.0 421.0,752.4 426.6,750.7 432.2,748.8 437.8,746.7 443.5,744.7 449.1,742.6 454.7,740.6 460.3,738.6 465.9,736.6 471.6,734.6 477.2,732.6 482.8,730.8 488.4,729.0 494.0,727.4 499.6,726.0 505.2,724.6 510.8,723.3 516.4,721.9 522.0,720.4 527.6,718.7 533.3,717.0 538.9,715.2 544.5,713.4 550.2,711.6 555.8,710.0 561.6,708.5 567.5,707.2 573.4,705.9 579.2,704.6 584.6,703.3 589.4,702.0 593.4,700.7 596.7,699.4 599.7,698.1 602.6,696.8 605.8,695.4 609.6,694.0 614.4,692.3 620.1,690.4 626.1,688.5 631.7,686.7 636.6,685.1 640.0,684.0" fill="none" stroke="#1e90ff" stroke-width="1.1" stroke-linejoin="round"/><path d="M324.500 100.500H1864.500V775.500H324.500Z" stroke="#fff" fill="none" shape-rendering="crispEdges"/><path d="M1865 113.5h3M1865 146.5h3M1865 179.5h3M1865 212.5h3M1865 245.5h3M1865 278.5h3M1865 311.5h3M1865 344.5h3M1865 377.5h3M1865 410.5h3M1865 443.5h3M1865 476.5h3M1865 509.5h3M1865 542.5h3M1865 575.5h3M1865 608.5h3M1865 641.5h3M1865 674.5h3M1865 707.5h3M1865 740.5h3M1865 773.5h3M325.5 776v3M389.5 776v3M453.5 776v3M517.5 776v3M581.5 776v3M645.5 776v3M709.5 776v3M773.5 776v3M837.5 776v3M901.5 776v3M965.5 776v3M1029.5 776v3M1093.5 776v3M1157.5 776v3M1221.5 776v3M1285.5 776v3M1349.5 776v3M1413.5 776v3M1477.5 776v3M1541.5 776v3M1605.5 776v3M1669.5 776v3M1733.5 776v3M1797.5 776v3" stroke="#fff" shape-rendering="crispEdges"/></svg>
<div class="t ax" style="left:1870px;top:107px;line-height:13px;color:#fff;letter-spacing:-0.3px">2015.90</div>
<div class="t ax" style="left:1870px;top:140px;line-height:13px;color:#fff;letter-spacing:-0.3px">2005.40</div>
<div class="t ax" style="left:1870px;top:173px;line-height:13px;color:#fff;letter-spacing:-0.3px">1995.20</div>
<div class="t ax" style="left:1870px;top:206px;line-height:13px;color:#fff;letter-spacing:-0.3px">1984.70</div>
<div class="t ax" style="left:1870px;top:239px;line-height:13px;color:#fff;letter-spacing:-0.3px">1974.20</div>
<div class="t ax" style="left:1870px;top:272px;line-height:13px;color:#fff;letter-spacing:-0.3px">1964.00</div>
<div class="t ax" style="left:1870px;top:305px;line-height:13px;color:#fff;letter-spacing:-0.3px">1953.50</div>
<div class="t ax" style="left:1870px;top:338px;line-height:13px;color:#fff;letter-spacing:-0.3px">1943.00</div>
<div class="t ax" style="left:1870px;top:371px;line-height:13px;color:#fff;letter-spacing:-0.3px">1932.50</div>
<div class="t ax" style="left:1870px;top:404px;line-height:13px;color:#fff;letter-spacing:-0.3px">1922.30</div>
<div class="t ax" style="left:1870px;top:437px;line-height:13px;color:#fff;letter-spacing:-0.3px">1911.80</div>
<div class="t ax" style="left:1870px;top:470px;line-height:13px;color:#fff;letter-spacing:-0.3px">1901.30</div>
<div class="t ax" style="left:1870px;top:503px;line-height:13px;color:#fff;letter-spacing:-0.3px">1890.80</div>
<div class="t ax" style="left:1870px;top:536px;line-height:13px;color:#fff;letter-spacing:-0.3px">1880.60</div>
<div class="t ax" style="left:1870px;top:569px;line-height:13px;color:#fff;letter-spacing:-0.3px">1870.10</div>
<div class="t ax" style="left:1870px;top:602px;line-height:13px;color:#fff;letter-spacing:-0.3px">1859.60</div>
<div class="t ax" style="left:1870px;top:635px;line-height:13px;color:#fff;letter-spacing:-0.3px">1849.40</div>
<div class="t ax" style="left:1870px;top:668px;line-height:13px;color:#fff;letter-spacing:-0.3px">1838.90</div>
<div class="t ax" style="left:1870px;top:701px;line-height:13px;color:#fff;letter-spacing:-0.3px">1828.40</div>
<div class="t ax" style="left:1870px;top:734px;line-height:13px;color:#fff;letter-spacing:-0.3px">1817.90</div>
<div class="t ax" style="left:1870px;top:767px;line-height:13px;color:#fff;letter-spacing:-0.3px">1807.70</div>
<div class="b" style="left:1866px;top:215px;width:34px;height:14px;background:#fff"></div>
<div class="t ax" style="left:1870px;top:216px;line-height:13px;color:#000;letter-spacing:-0.3px">1981.44</div>
<div class="t ax" style="left:324px;top:779px;line-height:13px;color:#fff;letter-spacing:-0.36px;">8 Mar 2023</div>
<div class="t ax" style="left:388px;top:779px;line-height:13px;color:#fff;letter-spacing:-0.35px;">9 Mar 05:45</div>
<div class="t ax" style="left:452px;top:779px;line-height:13px;color:#fff;letter-spacing:-0.35px;">9 Mar 13:45</div>
<div class="t ax" style="left:516px;top:779px;line-height:13px;color:#fff;letter-spacing:-0.35px;">9 Mar 21:45</div>
<div class="t ax" style="left:580px;top:779px;line-height:13px;color:#fff;letter-spacing:-0.33px;">10 Mar 06:45</div>
<div class="t ax" style="left:644px;top:779px;line-height:13px;color:#fff;letter-spacing:-0.33px;">10 Mar 14:45</div>
<div class="t ax" style="left:708px;top:779px;line-height:13px;color:#fff;letter-spacing:-0.33px;">10 Mar 22:45</div>
<div class="t ax" style="left:772px;top:779px;line-height:13px;color:#fff;letter-spacing:-0.33px;">13 Mar 07:45</div>
<div class="t ax" style="left:836px;top:779px;line-height:13px;color:#fff;letter-spacing:-0.33px;">13 Mar 15:45</div>
<div class="t ax" style="left:900px;top:779px;line-height:13px;color:#fff;letter-spacing:-0.33px;">13 Mar 23:45</div>
<div class="t ax" style="left:964px;top:779px;line-height:13px;color:#fff;letter-spacing:-0.33px;">14 Mar 08:45</div>
<div class="t ax" style="left:1028px;top:779px;line-height:13px;color:#fff;letter-spacing:-0.33px;">14 Mar 16:45</div>
<div class="t ax" style="left:1092px;top:779px;line-height:13px;color:#fff;letter-spacing:-0.33px;">15 Mar 01:45</div>
<div class="t ax" style="left:1156px;top:779px;line-height:13px;color:#fff;letter-spacing:-0.33px;">15 Mar 09:45</div>
<div class="t ax" style="left:1220px;top:779px;line-height:13px;color:#fff;letter-spacing:-0.33px;">15 Mar 17:45</div>
<div class="t ax" style="left:1284px;top:779px;line-height:13px;color:#fff;letter-spacing:-0.33px;">16 Mar 02:45</div>
<div class="t ax" style="left:1348px;top:779px;line-height:13px;color:#fff;letter-spacing:-0.33px;">16 Mar 10:45</div>
<div class="t ax" style="left:1412px;top:779px;line-height:13px;color:#fff;letter-spacing:-0.33px;">16 Mar 18:45</div>
<div class="t ax" style="left:1476px;top:779px;line-height:13px;color:#fff;letter-spacing:-0.33px;">17 Mar 03:45</div>
<div class="t ax" style="left:1540px;top:779px;line-height:13px;color:#fff;letter-spacing:-0.27px;">17 Mar 11:45</div>
<div class="t ax" style="left:1604px;top:779px;line-height:13px;color:#fff;letter-spacing:-0.33px;">17 Mar 19:45</div>
<div class="t ax" style="left:1668px;top:779px;line-height:13px;color:#fff;letter-spacing:-0.33px;">20 Mar 04:45</div>
<div class="t ax" style="left:1732px;top:779px;line-height:13px;color:#fff;letter-spacing:-0.33px;">20 Mar 12:45</div>
<div class="t ax" style="left:1796px;top:779px;line-height:13px;color:#fff;letter-spacing:-0.33px;">20 Mar 20:45</div>
<div class="t ax" style="left:329px;top:101px;line-height:13px;color:#fff;letter-spacing:-0.39px;">XAUUSD,M15</div>
<div class="b" style="left:325px;top:197px;width:94px;height:82px;overflow:hidden"><div class="t ax" style="left:8px;top:3px;line-height:11px;font-size:9.500px;color:#fff;">#9174348 buy stop 0.24</div><div class="t ax" style="left:8px;top:7px;line-height:11px;font-size:9.500px;color:#fff;">#9174347 buy stop 0.22</div><div class="t ax" style="left:8px;top:10px;line-height:11px;font-size:9.500px;color:#fff;">#9174346 buy stop 0.20</div><div class="t ax" style="left:8px;top:14px;line-height:11px;font-size:9.500px;color:#fff;">#9174345 buy stop 0.18</div><div class="t ax" style="left:8px;top:18px;line-height:11px;font-size:9.500px;color:#fff;">#9174344 buy stop 0.16</div><div class="t ax" style="left:8px;top:21px;line-height:11px;font-size:9.500px;color:#fff;">#9174343 buy stop 0.14</div><div class="t ax" style="left:8px;top:25px;line-height:11px;font-size:9.500px;color:#fff;">#9174342 buy stop 0.12</div><div class="t ax" style="left:8px;top:29px;line-height:11px;font-size:9.500px;color:#fff;">#9174341 buy stop 0.10</div><div class="t ax" style="left:8px;top:33px;line-height:11px;font-size:9.500px;color:#fff;">#9174340 buy stop 0.08</div><div class="t ax" style="left:8px;top:37px;line-height:11px;font-size:9.500px;color:#fff;">#9174339 buy stop 0.06</div><div class="t ax" style="left:8px;top:45px;line-height:11px;font-size:9.500px;color:#fff;">#9169990 sell stop 0.08</div><div class="t ax" style="left:8px;top:49px;line-height:11px;font-size:9.500px;color:#fff;">#9169989 sell stop 0.10</div><div class="t ax" style="left:8px;top:52px;line-height:11px;font-size:9.500px;color:#fff;">#9169988 sell stop 0.12</div><div class="t ax" style="left:8px;top:56px;line-height:11px;font-size:9.500px;color:#fff;">#9169987 sell stop 0.14</div><div class="t ax" style="left:8px;top:59px;line-height:11px;font-size:9.500px;color:#fff;">#9169986 sell stop 0.16</div><div class="t ax" style="left:8px;top:62px;line-height:11px;font-size:9.500px;color:#fff;">#9169985 sell stop 0.18</div><div class="t ax" style="left:8px;top:65px;line-height:11px;font-size:9.500px;color:#fff;">#9169984 sell stop 0.20</div><div class="t ax" style="left:8px;top:68px;line-height:11px;font-size:9.500px;color:#fff;">#9169983 sell stop 0.22</div></div>
<div class="t ax" style="left:398px;top:205px;color:#ff0;font-size:10px;line-height:12px;transform:rotate(90deg);transform-origin:0 0;left:412px;top:198px">&gt; 0.5</div>
<div class="b" style="left:403px;top:100px;width:16px;height:14px;background:#252a34;border:1px solid #9fb0cc;box-sizing:border-box;border-radius:2px;"></div>
<div class="t ax" style="left:403px;top:100px;width:16px;text-align:center;line-height:13px;color:#c8d4e8;font-size:11px">−</div>
<div class="b" style="left:403px;top:124px;width:16px;height:14px;background:#252a34;border:1px solid #9fb0cc;box-sizing:border-box;border-radius:2px;"></div>
<div class="t ax" style="left:403px;top:124px;width:16px;text-align:center;line-height:13px;color:#c8d4e8;font-size:10px">移</div>
<div class="b" style="left:403px;top:144px;width:16px;height:14px;background:#252a34;border:1px solid #9fb0cc;box-sizing:border-box;border-radius:2px;"></div>
<div class="t ax" style="left:403px;top:144px;width:16px;text-align:center;line-height:13px;color:#c8d4e8;font-size:11px">?</div>
<div class="b" style="left:403px;top:164px;width:16px;height:14px;background:#252a34;border:1px solid #9fb0cc;box-sizing:border-box;border-radius:2px;"></div>
<div class="t ax" style="left:403px;top:164px;width:16px;text-align:center;line-height:13px;color:#c8d4e8;font-size:11px">√</div>
<div class="b" style="left:322px;top:797px;width:1578px;height:2px;background:#fff"></div>
<div class="b" style="left:322px;top:799px;width:1578px;height:23px;background:#f0f0f0"></div>
<div class="b" style="left:426px;top:799px;width:1474px;height:1px;background:#000"></div>
<div class="b" style="left:326px;top:799px;width:100px;height:19px;background:#fff;border:1px solid #000;border-top:none;box-sizing:border-box;"></div>
<div class="t ui" style="left:336px;top:802px;line-height:17px;color:#000;letter-spacing:-0.22px;">XAUUSD,M15</div>
<div class="t ui" style="left:437px;top:802px;line-height:17px;color:#7c7c7c;letter-spacing:-0.45px;">XAUUSD,H1</div>
<div class="b" style="left:518px;top:802px;width:1px;height:14px;background:#555"></div>
<div class="b" style="left:320px;top:799px;width:1px;height:19px;background:#a0a0a0"></div>
<div class="b" style="left:0px;top:818px;width:320px;height:1px;background:#fafafa"></div>
<div class="b" style="left:321px;top:799px;width:6px;height:1px;background:#000"></div>
<svg class="b" style="left:1878px;top:803px;" width="24" height="10" viewBox="0 0 24 10"><path d="M6 1L2 5L6 9Z" fill="#888"/><path d="M20 1L24 5L20 9Z" fill="#888"/></svg>
<div class="b" style="left:420px;top:100px;width:1101px;height:593px;background:#252b35;border:1px solid #6f7f99;border-top-color:#fff;box-sizing:border-box;"></div>
<div class="b" style="left:421px;top:101px;width:1099px;height:40px;background:#1c1c1c"></div>
<div class="b" style="left:421px;top:678px;width:1099px;height:14px;background:#1c1c1c"></div>
<div class="t ar" style="left:425px;top:103px;line-height:14px;color:#ffff00;font-size:11.500px;letter-spacing:-0.57px;">MTCommander统计</div>
<div class="t ar" style="left:1300px;top:103px;width:1215px;left:300px;text-align:right;line-height:14px;font-size:11px"><span style="color:#9cc8f5;font-size:12px">复盘侠</span> <span style="color:#3fa3e8">http://MTCommander.com</span></div>
<div class="b" style="left:457px;top:124px;width:18px;height:16px;background:#2b3340;border-radius:2px"></div>
<div class="t ar" style="left:436.5px;top:126px;line-height:14px;color:#5d6573;font-size:12px">综</div>
<div class="t ar" style="left:458.5px;top:126px;line-height:14px;color:#c3cfe6;font-size:12px">日</div>
<div class="t ar" style="left:481px;top:126px;line-height:14px;color:#5d6573;font-size:12px">周</div>
<div class="t ar" style="left:503px;top:126px;line-height:14px;color:#5d6573;font-size:12px">月</div>
<div class="t ar" style="left:525px;top:126px;line-height:14px;color:#5d6573;font-size:12px">季</div>
<div class="t ar" style="left:547px;top:126px;line-height:14px;color:#5d6573;font-size:12px">年</div>
<div class="t ar" style="left:568.5px;top:126px;line-height:14px;color:#5d6573;font-size:12px">币</div>
<div class="t ar" style="left:592.5px;top:126px;line-height:14px;color:#5d6573;font-size:11px">M</div>
<div class="t ar" style="left:613px;top:126px;line-height:14px;color:#5d6573;font-size:12px">备</div>
<div class="t ar" style="left:638px;top:126px;line-height:14px;color:#5d6573;font-size:12px">账户</div>
<div class="t ar" style="left:724.5px;top:126px;line-height:14px;color:#5d6573;font-size:12px">轨迹</div>
<svg class="b" style="left:0px;top:0px;pointer-events:none" width="1900" height="700" viewBox="0 0 1900 700"><path d="M433.500 144V242M433 241.500H1498" stroke="#6a6a6a" fill="none" shape-rendering="crispEdges"/><polyline points="433.8,240.5 461.4,242.0 476.6,242.0 488.0,240.0 555.7,236.0 623.0,232.4 656.7,227.3 724.0,224.0 825.0,219.6 892.0,215.5 960.0,211.3 1007.0,222.0 1034.0,219.7 1078.7,217.7 1115.8,211.3 1182.6,206.3 1256.8,202.4 1308.8,200.4 1345.9,176.6 1385.5,166.7 1454.7,156.8 1498.3,144.5" fill="none" stroke="#00bfff" stroke-width="2" stroke-linejoin="round"/><path d="M1520 137L1515 142L1520 147Z" fill="#e8e8e8"/><rect x="497.500" y="272.500" width="353" height="115" fill="none" stroke="#ffff00" shape-rendering="crispEdges"/><rect x="848.500" y="263.500" width="74" height="418" fill="none" stroke="#e83030" shape-rendering="crispEdges"/></svg>
<div class="t ar" style="left:428px;top:242px;line-height:12px;color:#6c7687;font-size:10px">2023.01.03</div>
<div class="t ar" style="left:1396px;top:242px;line-height:12px;color:#6c7687;font-size:10px;width:100px;text-align:right">2023.03.20</div>
<div class="t ar" style="left:426px;top:259px;line-height:15px;color:#c3cfe6;font-size:12px">日期</div>
<div class="t ar" style="left:506px;top:259px;line-height:15px;color:#c3cfe6;font-size:12px">总手数</div>
<div class="t ar" style="left:556px;top:259px;line-height:15px;color:#c3cfe6;font-size:12px">最小|大手数</div>
<div class="t ar" style="left:626px;top:259px;line-height:15px;color:#c3cfe6;font-size:12px">次数</div>
<div class="t ar" style="left:656px;top:259px;line-height:15px;color:#c3cfe6;font-size:12px">盈亏金额</div>
<div class="t ar" style="left:736px;top:259px;line-height:15px;color:#c3cfe6;font-size:12px">百分比%</div>
<div class="t ar" style="left:796px;top:259px;line-height:15px;color:#c3cfe6;font-size:12px">出入金</div>
<div class="t ar" style="left:856px;top:259px;line-height:15px;color:#c3cfe6;font-size:12px">余额</div>
<div class="t ar" style="left:936px;top:259px;line-height:15px;color:#c3cfe6;font-size:12px">最大浮亏金额</div>
<div class="t ar" style="left:1016px;top:259px;line-height:15px;color:#c3cfe6;font-size:12px">最大浮亏比例</div>
<div class="t ar" style="left:1096px;top:259px;line-height:15px;color:#c3cfe6;font-size:12px">最大浮盈金额</div>
<div class="t ar" style="left:1176px;top:259px;line-height:15px;color:#c3cfe6;font-size:12px">最大浮盈比例</div>
<div class="t ar" style="left:1256px;top:259px;line-height:15px;color:#c3cfe6;font-size:12px">最小|平均|最大持仓时间</div>
<div class="t ar" style="left:1446px;top:259px;line-height:15px;color:#c3cfe6;font-size:12px">胜率</div>
<div class="t ar" style="left:426px;top:273px;line-height:15px;color:#c3cfe6;font-size:12px">持仓</div>
<div class="t ar" style="left:506px;top:272px;line-height:14px;color:#00e868">1.98</div>
<div class="t ar" style="left:556px;top:272px;line-height:14px;color:#00e868">0.02 | 0.24</div>
<div class="t ar" style="left:626px;top:272px;line-height:14px;color:#00e868">18</div>
<div class="t ar" style="left:656px;top:272px;line-height:14px;color:#00e868">-437.93</div>
<div class="t ar" style="left:736px;top:272px;line-height:14px;color:#00e868">-2.20 %</div>
<div class="t ar" style="left:796px;top:272px;line-height:14px;color:#c3cfe6">0</div>
<div class="t ar" style="left:856px;top:272px;line-height:14px;color:#c3cfe6">19940.11</div>
<div class="t ar" style="left:936px;top:272px;line-height:14px;color:#00e868">-475.37</div>
<div class="t ar" style="left:1016px;top:272px;line-height:14px;color:#00e868">-2.38 %</div>
<div class="t ar" style="left:1096px;top:272px;line-height:14px;color:#c3cfe6">0.00</div>
<div class="t ar" style="left:1176px;top:272px;line-height:14px;color:#c3cfe6">0.00 %</div>
<div class="t ar" style="left:1256px;top:272px;line-height:14px;color:#c3cfe6">7:44:25 | 10:58:23 | 12:36:29</div>
<div class="t ar" style="left:426px;top:286px;line-height:14px;color:#c3cfe6">2023.03.20</div>
<div class="t ar" style="left:506px;top:286px;line-height:14px;color:#ff1a1a">12.60</div>
<div class="t ar" style="left:556px;top:286px;line-height:14px;color:#ff1a1a">0.02 | 0.20</div>
<div class="t ar" style="left:626px;top:286px;line-height:14px;color:#ff1a1a">194</div>
<div class="t ar" style="left:656px;top:286px;line-height:14px;color:#ff1a1a">803.24</div>
<div class="t ar" style="left:736px;top:286px;line-height:14px;color:#ff1a1a">4.20 %</div>
<div class="t ar" style="left:796px;top:286px;line-height:14px;color:#c3cfe6">0</div>
<div class="t ar" style="left:856px;top:286px;line-height:14px;color:#c3cfe6">19940.11</div>
<div class="t ar" style="left:936px;top:286px;line-height:14px;color:#c3cfe6">0</div>
<div class="t ar" style="left:1016px;top:286px;line-height:14px;color:#c3cfe6">0.00 %</div>
<div class="t ar" style="left:1096px;top:286px;line-height:14px;color:#c3cfe6">0</div>
<div class="t ar" style="left:1176px;top:286px;line-height:14px;color:#c3cfe6">0.00 %</div>
<div class="t ar" style="left:1256px;top:286px;line-height:14px;color:#c3cfe6">0:00:05 | 0:57:28 | 49:05:58</div>
<div class="t ar" style="left:1446px;top:286px;line-height:14px;color:#c3cfe6">74.74 %</div>
<div class="t ar" style="left:426px;top:300px;line-height:14px;color:#c3cfe6">2023.03.17</div>
<div class="t ar" style="left:506px;top:300px;line-height:14px;color:#ff1a1a">8.68</div>
<div class="t ar" style="left:556px;top:300px;line-height:14px;color:#ff1a1a">0.02 | 0.28</div>
<div class="t ar" style="left:626px;top:300px;line-height:14px;color:#ff1a1a">113</div>
<div class="t ar" style="left:656px;top:300px;line-height:14px;color:#ff1a1a">474.51</div>
<div class="t ar" style="left:736px;top:300px;line-height:14px;color:#ff1a1a">2.54 %</div>
<div class="t ar" style="left:796px;top:300px;line-height:14px;color:#c3cfe6">0</div>
<div class="t ar" style="left:856px;top:300px;line-height:14px;color:#c3cfe6">19136.87</div>
<div class="t ar" style="left:936px;top:300px;line-height:14px;color:#c3cfe6">0</div>
<div class="t ar" style="left:1016px;top:300px;line-height:14px;color:#c3cfe6">0.00 %</div>
<div class="t ar" style="left:1096px;top:300px;line-height:14px;color:#c3cfe6">0</div>
<div class="t ar" style="left:1176px;top:300px;line-height:14px;color:#c3cfe6">0.00 %</div>
<div class="t ar" style="left:1256px;top:300px;line-height:14px;color:#c3cfe6">0:00:01 | 1:34:39 | 10:49:42</div>
<div class="t ar" style="left:1446px;top:300px;line-height:14px;color:#c3cfe6">72.57 %</div>
<div class="t ar" style="left:426px;top:314px;line-height:14px;color:#c3cfe6">2023.03.16</div>
<div class="t ar" style="left:506px;top:314px;line-height:14px;color:#ff1a1a">6.30</div>
<div class="t ar" style="left:556px;top:314px;line-height:14px;color:#ff1a1a">0.02 | 0.20</div>
<div class="t ar" style="left:626px;top:314px;line-height:14px;color:#ff1a1a">93</div>
<div class="t ar" style="left:656px;top:314px;line-height:14px;color:#ff1a1a">374.61</div>
<div class="t ar" style="left:736px;top:314px;line-height:14px;color:#ff1a1a">2.05 %</div>
<div class="t ar" style="left:796px;top:314px;line-height:14px;color:#c3cfe6">0</div>
<div class="t ar" style="left:856px;top:314px;line-height:14px;color:#c3cfe6">18662.36</div>
<div class="t ar" style="left:936px;top:314px;line-height:14px;color:#c3cfe6">0</div>
<div class="t ar" style="left:1016px;top:314px;line-height:14px;color:#c3cfe6">0.00 %</div>
<div class="t ar" style="left:1096px;top:314px;line-height:14px;color:#c3cfe6">0</div>
<div class="t ar" style="left:1176px;top:314px;line-height:14px;color:#c3cfe6">0.00 %</div>
<div class="t ar" style="left:1256px;top:314px;line-height:14px;color:#c3cfe6">0:00:01 | 1:39:04 | 5:46:34</div>
<div class="t ar" style="left:1446px;top:314px;line-height:14px;color:#c3cfe6">76.34 %</div>
<div class="t ar" style="left:426px;top:328px;line-height:14px;color:#c3cfe6">2023.03.15</div>
<div class="t ar" style="left:506px;top:328px;line-height:14px;color:#ff1a1a">10.62</div>
<div class="t ar" style="left:556px;top:328px;line-height:14px;color:#ff1a1a">0.02 | 0.28</div>
<div class="t ar" style="left:626px;top:328px;line-height:14px;color:#ff1a1a">150</div>
<div class="t ar" style="left:656px;top:328px;line-height:14px;color:#ff1a1a">729.93</div>
<div class="t ar" style="left:736px;top:328px;line-height:14px;color:#ff1a1a">4.16 %</div>
<div class="t ar" style="left:796px;top:328px;line-height:14px;color:#c3cfe6">0</div>
<div class="t ar" style="left:856px;top:328px;line-height:14px;color:#c3cfe6">18287.75</div>
<div class="t ar" style="left:936px;top:328px;line-height:14px;color:#c3cfe6">0</div>
<div class="t ar" style="left:1016px;top:328px;line-height:14px;color:#c3cfe6">0.00 %</div>
<div class="t ar" style="left:1096px;top:328px;line-height:14px;color:#c3cfe6">0</div>
<div class="t ar" style="left:1176px;top:328px;line-height:14px;color:#c3cfe6">0.00 %</div>
<div class="t ar" style="left:1256px;top:328px;line-height:14px;color:#c3cfe6">0:00:01 | 4:20:31 | 41:38:48</div>
<div class="t ar" style="left:1446px;top:328px;line-height:14px;color:#c3cfe6">77.33 %</div>
<div class="t ar" style="left:426px;top:342px;line-height:14px;color:#c3cfe6">2023.03.13</div>
<div class="t ar" style="left:506px;top:342px;line-height:14px;color:#ff1a1a">7.28</div>
<div class="t ar" style="left:556px;top:342px;line-height:14px;color:#ff1a1a">0.02 | 0.45</div>
<div class="t ar" style="left:626px;top:342px;line-height:14px;color:#ff1a1a">121</div>
<div class="t ar" style="left:656px;top:342px;line-height:14px;color:#ff1a1a">1458.33</div>
<div class="t ar" style="left:736px;top:342px;line-height:14px;color:#ff1a1a">9.06 %</div>
<div class="t ar" style="left:796px;top:342px;line-height:14px;color:#c3cfe6">0</div>
<div class="t ar" style="left:856px;top:342px;line-height:14px;color:#c3cfe6">17557.82</div>
<div class="t ar" style="left:936px;top:342px;line-height:14px;color:#c3cfe6">0</div>
<div class="t ar" style="left:1016px;top:342px;line-height:14px;color:#c3cfe6">0.00 %</div>
<div class="t ar" style="left:1096px;top:342px;line-height:14px;color:#c3cfe6">0</div>
<div class="t ar" style="left:1176px;top:342px;line-height:14px;color:#c3cfe6">0.00 %</div>
<div class="t ar" style="left:1256px;top:342px;line-height:14px;color:#c3cfe6">0:00:01 | 33:12:17 | 279:03:26</div>
<div class="t ar" style="left:1446px;top:342px;line-height:14px;color:#c3cfe6">74.38 %</div>
<div class="t ar" style="left:426px;top:356px;line-height:14px;color:#c3cfe6">2023.03.01</div>
<div class="t ar" style="left:506px;top:356px;line-height:14px;color:#ff1a1a">0.71</div>
<div class="t ar" style="left:556px;top:356px;line-height:14px;color:#ff1a1a">0.02 | 0.11</div>
<div class="t ar" style="left:626px;top:356px;line-height:14px;color:#ff1a1a">23</div>
<div class="t ar" style="left:656px;top:356px;line-height:14px;color:#ff1a1a">106.54</div>
<div class="t ar" style="left:736px;top:356px;line-height:14px;color:#ff1a1a">0.67 %</div>
<div class="t ar" style="left:796px;top:356px;line-height:14px;color:#c3cfe6">0</div>
<div class="t ar" style="left:856px;top:356px;line-height:14px;color:#c3cfe6">16099.49</div>
<div class="t ar" style="left:936px;top:356px;line-height:14px;color:#c3cfe6">0</div>
<div class="t ar" style="left:1016px;top:356px;line-height:14px;color:#c3cfe6">0.00 %</div>
<div class="t ar" style="left:1096px;top:356px;line-height:14px;color:#c3cfe6">0</div>
<div class="t ar" style="left:1176px;top:356px;line-height:14px;color:#c3cfe6">0.00 %</div>
<div class="t ar" style="left:1256px;top:356px;line-height:14px;color:#c3cfe6">0:00:42 | 7:42:30 | 22:41:36</div>
<div class="t ar" style="left:1446px;top:356px;line-height:14px;color:#c3cfe6">73.91 %</div>
<div class="t ar" style="left:426px;top:370px;line-height:14px;color:#c3cfe6">2023.02.28</div>
<div class="t ar" style="left:506px;top:370px;line-height:14px;color:#ff1a1a">0.64</div>
<div class="t ar" style="left:556px;top:370px;line-height:14px;color:#ff1a1a">0.02 | 0.21</div>
<div class="t ar" style="left:626px;top:370px;line-height:14px;color:#ff1a1a">13</div>
<div class="t ar" style="left:656px;top:370px;line-height:14px;color:#ff1a1a">90.98</div>
<div class="t ar" style="left:736px;top:370px;line-height:14px;color:#ff1a1a">0.57 %</div>
<div class="t ar" style="left:796px;top:370px;line-height:14px;color:#c3cfe6">0</div>
<div class="t ar" style="left:856px;top:370px;line-height:14px;color:#c3cfe6">15992.95</div>
<div class="t ar" style="left:936px;top:370px;line-height:14px;color:#c3cfe6">0</div>
<div class="t ar" style="left:1016px;top:370px;line-height:14px;color:#c3cfe6">0.00 %</div>
<div class="t ar" style="left:1096px;top:370px;line-height:14px;color:#c3cfe6">0</div>
<div class="t ar" style="left:1176px;top:370px;line-height:14px;color:#c3cfe6">0.00 %</div>
<div class="t ar" style="left:1256px;top:370px;line-height:14px;color:#c3cfe6">1:00:55 | 55:19:38 | 97:34:27</div>
<div class="t ar" style="left:1446px;top:370px;line-height:14px;color:#c3cfe6">61.54 %</div>
<div class="t ar" style="left:426px;top:384px;line-height:14px;color:#c3cfe6">2023.02.24</div>
<div class="t ar" style="left:506px;top:384px;line-height:14px;color:#ff1a1a">2.32</div>
<div class="t ar" style="left:556px;top:384px;line-height:14px;color:#ff1a1a">0.02 | 1.06</div>
<div class="t ar" style="left:626px;top:384px;line-height:14px;color:#ff1a1a">17</div>
<div class="t ar" style="left:656px;top:384px;line-height:14px;color:#ff1a1a">110.35</div>
<div class="t ar" style="left:736px;top:384px;line-height:14px;color:#ff1a1a">0.70 %</div>
<div class="t ar" style="left:796px;top:384px;line-height:14px;color:#c3cfe6">0</div>
<div class="t ar" style="left:856px;top:384px;line-height:14px;color:#c3cfe6">15901.97</div>
<div class="t ar" style="left:936px;top:384px;line-height:14px;color:#c3cfe6">0</div>
<div class="t ar" style="left:1016px;top:384px;line-height:14px;color:#c3cfe6">0.00 %</div>
<div class="t ar" style="left:1096px;top:384px;line-height:14px;color:#c3cfe6">0</div>
<div class="t ar" style="left:1176px;top:384px;line-height:14px;color:#c3cfe6">0.00 %</div>
<div class="t ar" style="left:1256px;top:384px;line-height:14px;color:#c3cfe6">0:09:50 | 106:45:01 | 167:11:00</div>
<div class="t ar" style="left:1446px;top:384px;line-height:14px;color:#c3cfe6">58.82 %</div>
<div class="t ar" style="left:426px;top:398px;line-height:14px;color:#c3cfe6">2023.02.17</div>
<div class="t ar" style="left:506px;top:398px;line-height:14px;color:#ff1a1a">1.32</div>
<div class="t ar" style="left:556px;top:398px;line-height:14px;color:#ff1a1a">0.02 | 0.21</div>
<div class="t ar" style="left:626px;top:398px;line-height:14px;color:#ff1a1a">35</div>
<div class="t ar" style="left:656px;top:398px;line-height:14px;color:#ff1a1a">209.13</div>
<div class="t ar" style="left:736px;top:398px;line-height:14px;color:#ff1a1a">1.34 %</div>
<div class="t ar" style="left:796px;top:398px;line-height:14px;color:#c3cfe6">0</div>
<div class="t ar" style="left:856px;top:398px;line-height:14px;color:#c3cfe6">15791.62</div>
<div class="t ar" style="left:936px;top:398px;line-height:14px;color:#c3cfe6">0</div>
<div class="t ar" style="left:1016px;top:398px;line-height:14px;color:#c3cfe6">0.00 %</div>
<div class="t ar" style="left:1096px;top:398px;line-height:14px;color:#c3cfe6">0</div>
<div class="t ar" style="left:1176px;top:398px;line-height:14px;color:#c3cfe6">0.00 %</div>
<div class="t ar" style="left:1256px;top:398px;line-height:14px;color:#c3cfe6">0:01:41 | 5:32:22 | 15:29:35</div>
<div class="t ar" style="left:1446px;top:398px;line-height:14px;color:#c3cfe6">71.43 %</div>
<div class="t ar" style="left:426px;top:412px;line-height:14px;color:#c3cfe6">2023.02.16</div>
<div class="t ar" style="left:506px;top:412px;line-height:14px;color:#ff1a1a">1.38</div>
<div class="t ar" style="left:556px;top:412px;line-height:14px;color:#ff1a1a">0.02 | 0.45</div>
<div class="t ar" style="left:626px;top:412px;line-height:14px;color:#ff1a1a">23</div>
<div class="t ar" style="left:656px;top:412px;line-height:14px;color:#ff1a1a">147.67</div>
<div class="t ar" style="left:736px;top:412px;line-height:14px;color:#ff1a1a">0.96 %</div>
<div class="t ar" style="left:796px;top:412px;line-height:14px;color:#c3cfe6">0</div>
<div class="t ar" style="left:856px;top:412px;line-height:14px;color:#c3cfe6">15582.49</div>
<div class="t ar" style="left:936px;top:412px;line-height:14px;color:#c3cfe6">0</div>
<div class="t ar" style="left:1016px;top:412px;line-height:14px;color:#c3cfe6">0.00 %</div>
<div class="t ar" style="left:1096px;top:412px;line-height:14px;color:#c3cfe6">0</div>
<div class="t ar" style="left:1176px;top:412px;line-height:14px;color:#c3cfe6">0.00 %</div>
<div class="t ar" style="left:1256px;top:412px;line-height:14px;color:#c3cfe6">0:00:02 | 27:11:24 | 45:33:34</div>
<div class="t ar" style="left:1446px;top:412px;line-height:14px;color:#c3cfe6">65.22 %</div>
<div class="t ar" style="left:426px;top:426px;line-height:14px;color:#c3cfe6">2023.02.14</div>
<div class="t ar" style="left:506px;top:426px;line-height:14px;color:#ff1a1a">3.38</div>
<div class="t ar" style="left:556px;top:426px;line-height:14px;color:#ff1a1a">0.02 | 1.06</div>
<div class="t ar" style="left:626px;top:426px;line-height:14px;color:#ff1a1a">50</div>
<div class="t ar" style="left:656px;top:426px;line-height:14px;color:#ff1a1a">368.28</div>
<div class="t ar" style="left:736px;top:426px;line-height:14px;color:#ff1a1a">2.44 %</div>
<div class="t ar" style="left:796px;top:426px;line-height:14px;color:#c3cfe6">0</div>
<div class="t ar" style="left:856px;top:426px;line-height:14px;color:#c3cfe6">15434.82</div>
<div class="t ar" style="left:936px;top:426px;line-height:14px;color:#c3cfe6">0</div>
<div class="t ar" style="left:1016px;top:426px;line-height:14px;color:#c3cfe6">0.00 %</div>
<div class="t ar" style="left:1096px;top:426px;line-height:14px;color:#c3cfe6">0</div>
<div class="t ar" style="left:1176px;top:426px;line-height:14px;color:#c3cfe6">0.00 %</div>
<div class="t ar" style="left:1256px;top:426px;line-height:14px;color:#c3cfe6">0:00:02 | 45:58:37 | 145:09:09</div>
<div class="t ar" style="left:1446px;top:426px;line-height:14px;color:#c3cfe6">68.00 %</div>
<div class="t ar" style="left:426px;top:440px;line-height:14px;color:#c3cfe6">2023.02.08</div>
<div class="t ar" style="left:506px;top:440px;line-height:14px;color:#ff1a1a">1.11</div>
<div class="t ar" style="left:556px;top:440px;line-height:14px;color:#ff1a1a">0.02 | 0.21</div>
<div class="t ar" style="left:626px;top:440px;line-height:14px;color:#ff1a1a">31</div>
<div class="t ar" style="left:656px;top:440px;line-height:14px;color:#ff1a1a">157.76</div>
<div class="t ar" style="left:736px;top:440px;line-height:14px;color:#ff1a1a">1.06 %</div>
<div class="t ar" style="left:796px;top:440px;line-height:14px;color:#c3cfe6">0</div>
<div class="t ar" style="left:856px;top:440px;line-height:14px;color:#c3cfe6">15066.54</div>
<div class="t ar" style="left:936px;top:440px;line-height:14px;color:#c3cfe6">0</div>
<div class="t ar" style="left:1016px;top:440px;line-height:14px;color:#c3cfe6">0.00 %</div>
<div class="t ar" style="left:1096px;top:440px;line-height:14px;color:#c3cfe6">0</div>
<div class="t ar" style="left:1176px;top:440px;line-height:14px;color:#c3cfe6">0.00 %</div>
<div class="t ar" style="left:1256px;top:440px;line-height:14px;color:#c3cfe6">0:00:10 | 35:12:04 | 111:41:23</div>
<div class="t ar" style="left:1446px;top:440px;line-height:14px;color:#c3cfe6">70.97 %</div>
<div class="t ar" style="left:426px;top:454px;line-height:14px;color:#c3cfe6">2023.02.03</div>
<div class="t ar" style="left:506px;top:454px;line-height:14px;color:#ff1a1a">0.82</div>
<div class="t ar" style="left:556px;top:454px;line-height:14px;color:#ff1a1a">0.02 | 0.21</div>
<div class="t ar" style="left:626px;top:454px;line-height:14px;color:#ff1a1a">21</div>
<div class="t ar" style="left:656px;top:454px;line-height:14px;color:#ff1a1a">120.40</div>
<div class="t ar" style="left:736px;top:454px;line-height:14px;color:#ff1a1a">0.81 %</div>
<div class="t ar" style="left:796px;top:454px;line-height:14px;color:#c3cfe6">0</div>
<div class="t ar" style="left:856px;top:454px;line-height:14px;color:#c3cfe6">14908.78</div>
<div class="t ar" style="left:936px;top:454px;line-height:14px;color:#c3cfe6">0</div>
<div class="t ar" style="left:1016px;top:454px;line-height:14px;color:#c3cfe6">0.00 %</div>
<div class="t ar" style="left:1096px;top:454px;line-height:14px;color:#c3cfe6">0</div>
<div class="t ar" style="left:1176px;top:454px;line-height:14px;color:#c3cfe6">0.00 %</div>
<div class="t ar" style="left:1256px;top:454px;line-height:14px;color:#c3cfe6">0:00:01 | 7:41:21 | 20:15:32</div>
<div class="t ar" style="left:1446px;top:454px;line-height:14px;color:#c3cfe6">57.14 %</div>
<div class="t ar" style="left:426px;top:468px;line-height:14px;color:#c3cfe6">2023.02.02</div>
<div class="t ar" style="left:506px;top:468px;line-height:14px;color:#00e868">12.53</div>
<div class="t ar" style="left:556px;top:468px;line-height:14px;color:#00e868">0.02 | 10.00</div>
<div class="t ar" style="left:626px;top:468px;line-height:14px;color:#00e868">19</div>
<div class="t ar" style="left:656px;top:468px;line-height:14px;color:#00e868">-617.19</div>
<div class="t ar" style="left:736px;top:468px;line-height:14px;color:#00e868">-4.01 %</div>
<div class="t ar" style="left:796px;top:468px;line-height:14px;color:#c3cfe6">0</div>
<div class="t ar" style="left:856px;top:468px;line-height:14px;color:#c3cfe6">14788.38</div>
<div class="t ar" style="left:936px;top:468px;line-height:14px;color:#c3cfe6">0</div>
<div class="t ar" style="left:1016px;top:468px;line-height:14px;color:#c3cfe6">0.00 %</div>
<div class="t ar" style="left:1096px;top:468px;line-height:14px;color:#c3cfe6">0</div>
<div class="t ar" style="left:1176px;top:468px;line-height:14px;color:#c3cfe6">0.00 %</div>
<div class="t ar" style="left:1256px;top:468px;line-height:14px;color:#c3cfe6">0:00:14 | 14:45:44 | 21:45:19</div>
<div class="t ar" style="left:1446px;top:468px;line-height:14px;color:#c3cfe6">52.63 %</div>
<div class="t ar" style="left:426px;top:482px;line-height:14px;color:#c3cfe6">2023.02.01</div>
<div class="t ar" style="left:506px;top:482px;line-height:14px;color:#ff1a1a">0.88</div>
<div class="t ar" style="left:556px;top:482px;line-height:14px;color:#ff1a1a">0.02 | 0.21</div>
<div class="t ar" style="left:626px;top:482px;line-height:14px;color:#ff1a1a">24</div>
<div class="t ar" style="left:656px;top:482px;line-height:14px;color:#ff1a1a">64.74</div>
<div class="t ar" style="left:736px;top:482px;line-height:14px;color:#ff1a1a">0.42 %</div>
<div class="t ar" style="left:796px;top:482px;line-height:14px;color:#c3cfe6">0</div>
<div class="t ar" style="left:856px;top:482px;line-height:14px;color:#c3cfe6">15405.57</div>
<div class="t ar" style="left:936px;top:482px;line-height:14px;color:#c3cfe6">0</div>
<div class="t ar" style="left:1016px;top:482px;line-height:14px;color:#c3cfe6">0.00 %</div>
<div class="t ar" style="left:1096px;top:482px;line-height:14px;color:#c3cfe6">0</div>
<div class="t ar" style="left:1176px;top:482px;line-height:14px;color:#c3cfe6">0.00 %</div>
<div class="t ar" style="left:1256px;top:482px;line-height:14px;color:#c3cfe6">0:00:01 | 10:58:32 | 28:54:50</div>
<div class="t ar" style="left:1446px;top:482px;line-height:14px;color:#c3cfe6">66.67 %</div>
<div class="t ar" style="left:426px;top:496px;line-height:14px;color:#c3cfe6">2023.01.31</div>
<div class="t ar" style="left:506px;top:496px;line-height:14px;color:#ff1a1a">3.15</div>
<div class="t ar" style="left:556px;top:496px;line-height:14px;color:#ff1a1a">0.02 | 1.06</div>
<div class="t ar" style="left:626px;top:496px;line-height:14px;color:#ff1a1a">37</div>
<div class="t ar" style="left:656px;top:496px;line-height:14px;color:#ff1a1a">219.37</div>
<div class="t ar" style="left:736px;top:496px;line-height:14px;color:#ff1a1a">1.45 %</div>
<div class="t ar" style="left:796px;top:496px;line-height:14px;color:#c3cfe6">0</div>
<div class="t ar" style="left:856px;top:496px;line-height:14px;color:#c3cfe6">15340.83</div>
<div class="t ar" style="left:936px;top:496px;line-height:14px;color:#c3cfe6">0</div>
<div class="t ar" style="left:1016px;top:496px;line-height:14px;color:#c3cfe6">0.00 %</div>
<div class="t ar" style="left:1096px;top:496px;line-height:14px;color:#c3cfe6">0</div>
<div class="t ar" style="left:1176px;top:496px;line-height:14px;color:#c3cfe6">0.00 %</div>
<div class="t ar" style="left:1256px;top:496px;line-height:14px;color:#c3cfe6">0:00:07 | 72:22:56 | 176:08:45</div>
<div class="t ar" style="left:1446px;top:496px;line-height:14px;color:#c3cfe6">62.16 %</div>
<div class="t ar" style="left:426px;top:510px;line-height:14px;color:#c3cfe6">2023.01.24</div>
<div class="t ar" style="left:506px;top:510px;line-height:14px;color:#ff1a1a">0.09</div>
<div class="t ar" style="left:556px;top:510px;line-height:14px;color:#ff1a1a">0.02 | 0.03</div>
<div class="t ar" style="left:626px;top:510px;line-height:14px;color:#ff1a1a">4</div>
<div class="t ar" style="left:656px;top:510px;line-height:14px;color:#ff1a1a">15.74</div>
<div class="t ar" style="left:736px;top:510px;line-height:14px;color:#ff1a1a">0.10 %</div>
<div class="t ar" style="left:796px;top:510px;line-height:14px;color:#c3cfe6">0</div>
<div class="t ar" style="left:856px;top:510px;line-height:14px;color:#c3cfe6">15121.46</div>
<div class="t ar" style="left:936px;top:510px;line-height:14px;color:#c3cfe6">0</div>
<div class="t ar" style="left:1016px;top:510px;line-height:14px;color:#c3cfe6">0.00 %</div>
<div class="t ar" style="left:1096px;top:510px;line-height:14px;color:#c3cfe6">0</div>
<div class="t ar" style="left:1176px;top:510px;line-height:14px;color:#c3cfe6">0.00 %</div>
<div class="t ar" style="left:1256px;top:510px;line-height:14px;color:#c3cfe6">0:02:04 | 3:03:03 | 5:01:15</div>
<div class="t ar" style="left:1446px;top:510px;line-height:14px;color:#c3cfe6">100.00 %</div>
<div class="t ar" style="left:426px;top:524px;line-height:14px;color:#c3cfe6">2023.01.23</div>
<div class="t ar" style="left:506px;top:524px;line-height:14px;color:#ff1a1a">0.99</div>
<div class="t ar" style="left:556px;top:524px;line-height:14px;color:#ff1a1a">0.02 | 0.21</div>
<div class="t ar" style="left:626px;top:524px;line-height:14px;color:#ff1a1a">23</div>
<div class="t ar" style="left:656px;top:524px;line-height:14px;color:#ff1a1a">183.07</div>
<div class="t ar" style="left:736px;top:524px;line-height:14px;color:#ff1a1a">1.23 %</div>
<div class="t ar" style="left:796px;top:524px;line-height:14px;color:#c3cfe6">0</div>
<div class="t ar" style="left:856px;top:524px;line-height:14px;color:#c3cfe6">15105.72</div>
<div class="t ar" style="left:936px;top:524px;line-height:14px;color:#c3cfe6">0</div>
<div class="t ar" style="left:1016px;top:524px;line-height:14px;color:#c3cfe6">0.00 %</div>
<div class="t ar" style="left:1096px;top:524px;line-height:14px;color:#c3cfe6">0</div>
<div class="t ar" style="left:1176px;top:524px;line-height:14px;color:#c3cfe6">0.00 %</div>
<div class="t ar" style="left:1256px;top:524px;line-height:14px;color:#c3cfe6">0:00:01 | 43:05:08 | 89:56:36</div>
<div class="t ar" style="left:1446px;top:524px;line-height:14px;color:#c3cfe6">65.22 %</div>
<div class="t ar" style="left:426px;top:538px;line-height:14px;color:#c3cfe6">2023.01.19</div>
<div class="t ar" style="left:506px;top:538px;line-height:14px;color:#ff1a1a">1.24</div>
<div class="t ar" style="left:556px;top:538px;line-height:14px;color:#ff1a1a">0.02 | 0.45</div>
<div class="t ar" style="left:626px;top:538px;line-height:14px;color:#ff1a1a">19</div>
<div class="t ar" style="left:656px;top:538px;line-height:14px;color:#ff1a1a">157.51</div>
<div class="t ar" style="left:736px;top:538px;line-height:14px;color:#ff1a1a">1.07 %</div>
<div class="t ar" style="left:796px;top:538px;line-height:14px;color:#c3cfe6">0</div>
<div class="t ar" style="left:856px;top:538px;line-height:14px;color:#c3cfe6">14922.65</div>
<div class="t ar" style="left:936px;top:538px;line-height:14px;color:#c3cfe6">0</div>
<div class="t ar" style="left:1016px;top:538px;line-height:14px;color:#c3cfe6">0.00 %</div>
<div class="t ar" style="left:1096px;top:538px;line-height:14px;color:#c3cfe6">0</div>
<div class="t ar" style="left:1176px;top:538px;line-height:14px;color:#c3cfe6">0.00 %</div>
<div class="t ar" style="left:1256px;top:538px;line-height:14px;color:#c3cfe6">0:01:57 | 36:15:30 | 57:43:46</div>
<div class="t ar" style="left:1446px;top:538px;line-height:14px;color:#c3cfe6">68.42 %</div>
<div class="t ar" style="left:426px;top:552px;line-height:14px;color:#c3cfe6">2023.01.17</div>
<div class="t ar" style="left:506px;top:552px;line-height:14px;color:#ff1a1a">0.64</div>
<div class="t ar" style="left:556px;top:552px;line-height:14px;color:#ff1a1a">0.02 | 0.21</div>
<div class="t ar" style="left:626px;top:552px;line-height:14px;color:#ff1a1a">13</div>
<div class="t ar" style="left:656px;top:552px;line-height:14px;color:#ff1a1a">71.91</div>
<div class="t ar" style="left:736px;top:552px;line-height:14px;color:#ff1a1a">0.49 %</div>
<div class="t ar" style="left:796px;top:552px;line-height:14px;color:#c3cfe6">0</div>
<div class="t ar" style="left:856px;top:552px;line-height:14px;color:#c3cfe6">14765.14</div>
<div class="t ar" style="left:936px;top:552px;line-height:14px;color:#c3cfe6">0</div>
<div class="t ar" style="left:1016px;top:552px;line-height:14px;color:#c3cfe6">0.00 %</div>
<div class="t ar" style="left:1096px;top:552px;line-height:14px;color:#c3cfe6">0</div>
<div class="t ar" style="left:1176px;top:552px;line-height:14px;color:#c3cfe6">0.00 %</div>
<div class="t ar" style="left:1256px;top:552px;line-height:14px;color:#c3cfe6">5:33:51 | 27:37:45 | 31:43:48</div>
<div class="t ar" style="left:1446px;top:552px;line-height:14px;color:#c3cfe6">61.54 %</div>
<div class="t ar" style="left:426px;top:566px;line-height:14px;color:#c3cfe6">2023.01.16</div>
<div class="t ar" style="left:506px;top:566px;line-height:14px;color:#ff1a1a">0.24</div>
<div class="t ar" style="left:556px;top:566px;line-height:14px;color:#ff1a1a">0.02 | 0.04</div>
<div class="t ar" style="left:626px;top:566px;line-height:14px;color:#ff1a1a">10</div>
<div class="t ar" style="left:656px;top:566px;line-height:14px;color:#ff1a1a">31.67</div>
<div class="t ar" style="left:736px;top:566px;line-height:14px;color:#ff1a1a">0.22 %</div>
<div class="t ar" style="left:796px;top:566px;line-height:14px;color:#c3cfe6">0</div>
<div class="t ar" style="left:856px;top:566px;line-height:14px;color:#c3cfe6">14693.23</div>
<div class="t ar" style="left:936px;top:566px;line-height:14px;color:#c3cfe6">0</div>
<div class="t ar" style="left:1016px;top:566px;line-height:14px;color:#c3cfe6">0.00 %</div>
<div class="t ar" style="left:1096px;top:566px;line-height:14px;color:#c3cfe6">0</div>
<div class="t ar" style="left:1176px;top:566px;line-height:14px;color:#c3cfe6">0.00 %</div>
<div class="t ar" style="left:1256px;top:566px;line-height:14px;color:#c3cfe6">0:00:18 | 16:35:44 | 53:03:46</div>
<div class="t ar" style="left:1446px;top:566px;line-height:14px;color:#c3cfe6">90.00 %</div>
<div class="t ar" style="left:426px;top:580px;line-height:14px;color:#c3cfe6">2023.01.13</div>
<div class="t ar" style="left:506px;top:580px;line-height:14px;color:#ff1a1a">1.09</div>
<div class="t ar" style="left:556px;top:580px;line-height:14px;color:#ff1a1a">0.02 | 0.21</div>
<div class="t ar" style="left:626px;top:580px;line-height:14px;color:#ff1a1a">31</div>
<div class="t ar" style="left:656px;top:580px;line-height:14px;color:#ff1a1a">131.04</div>
<div class="t ar" style="left:736px;top:580px;line-height:14px;color:#ff1a1a">0.90 %</div>
<div class="t ar" style="left:796px;top:580px;line-height:14px;color:#c3cfe6">0</div>
<div class="t ar" style="left:856px;top:580px;line-height:14px;color:#c3cfe6">14661.56</div>
<div class="t ar" style="left:936px;top:580px;line-height:14px;color:#c3cfe6">0</div>
<div class="t ar" style="left:1016px;top:580px;line-height:14px;color:#c3cfe6">0.00 %</div>
<div class="t ar" style="left:1096px;top:580px;line-height:14px;color:#c3cfe6">0</div>
<div class="t ar" style="left:1176px;top:580px;line-height:14px;color:#c3cfe6">0.00 %</div>
<div class="t ar" style="left:1256px;top:580px;line-height:14px;color:#c3cfe6">0:00:43 | 5:56:52 | 20:48:56</div>
<div class="t ar" style="left:1446px;top:580px;line-height:14px;color:#c3cfe6">70.97 %</div>
<div class="t ar" style="left:426px;top:594px;line-height:14px;color:#c3cfe6">2023.01.12</div>
<div class="t ar" style="left:506px;top:594px;line-height:14px;color:#ff1a1a">2.11</div>
<div class="t ar" style="left:556px;top:594px;line-height:14px;color:#ff1a1a">0.02 | 0.45</div>
<div class="t ar" style="left:626px;top:594px;line-height:14px;color:#ff1a1a">45</div>
<div class="t ar" style="left:656px;top:594px;line-height:14px;color:#ff1a1a">336.57</div>
<div class="t ar" style="left:736px;top:594px;line-height:14px;color:#ff1a1a">2.37 %</div>
<div class="t ar" style="left:796px;top:594px;line-height:14px;color:#c3cfe6">0</div>
<div class="t ar" style="left:856px;top:594px;line-height:14px;color:#c3cfe6">14530.52</div>
<div class="t ar" style="left:936px;top:594px;line-height:14px;color:#c3cfe6">0</div>
<div class="t ar" style="left:1016px;top:594px;line-height:14px;color:#c3cfe6">0.00 %</div>
<div class="t ar" style="left:1096px;top:594px;line-height:14px;color:#c3cfe6">0</div>
<div class="t ar" style="left:1176px;top:594px;line-height:14px;color:#c3cfe6">0.00 %</div>
<div class="t ar" style="left:1256px;top:594px;line-height:14px;color:#c3cfe6">0:00:06 | 21:16:02 | 83:27:34</div>
<div class="t ar" style="left:1446px;top:594px;line-height:14px;color:#c3cfe6">68.89 %</div>
<div class="t ar" style="left:426px;top:608px;line-height:14px;color:#c3cfe6">2023.01.09</div>
<div class="t ar" style="left:506px;top:608px;line-height:14px;color:#ff1a1a">0.60</div>
<div class="t ar" style="left:556px;top:608px;line-height:14px;color:#ff1a1a">0.02 | 0.21</div>
<div class="t ar" style="left:626px;top:608px;line-height:14px;color:#ff1a1a">12</div>
<div class="t ar" style="left:656px;top:608px;line-height:14px;color:#ff1a1a">52.94</div>
<div class="t ar" style="left:736px;top:608px;line-height:14px;color:#ff1a1a">0.37 %</div>
<div class="t ar" style="left:796px;top:608px;line-height:14px;color:#c3cfe6">0</div>
<div class="t ar" style="left:856px;top:608px;line-height:14px;color:#c3cfe6">14193.95</div>
<div class="t ar" style="left:936px;top:608px;line-height:14px;color:#c3cfe6">0</div>
<div class="t ar" style="left:1016px;top:608px;line-height:14px;color:#c3cfe6">0.00 %</div>
<div class="t ar" style="left:1096px;top:608px;line-height:14px;color:#c3cfe6">0</div>
<div class="t ar" style="left:1176px;top:608px;line-height:14px;color:#c3cfe6">0.00 %</div>
<div class="t ar" style="left:1256px;top:608px;line-height:14px;color:#c3cfe6">0:00:00 | 48:01:57 | 58:47:02</div>
<div class="t ar" style="left:1446px;top:608px;line-height:14px;color:#c3cfe6">58.33 %</div>
<div class="t ar" style="left:426px;top:622px;line-height:14px;color:#c3cfe6">2023.01.06</div>
<div class="t ar" style="left:506px;top:622px;line-height:14px;color:#ff1a1a">1.15</div>
<div class="t ar" style="left:556px;top:622px;line-height:14px;color:#ff1a1a">0.02 | 0.21</div>
<div class="t ar" style="left:626px;top:622px;line-height:14px;color:#ff1a1a">29</div>
<div class="t ar" style="left:656px;top:622px;line-height:14px;color:#ff1a1a">138.49</div>
<div class="t ar" style="left:736px;top:622px;line-height:14px;color:#ff1a1a">0.99 %</div>
<div class="t ar" style="left:796px;top:622px;line-height:14px;color:#c3cfe6">0</div>
<div class="t ar" style="left:856px;top:622px;line-height:14px;color:#c3cfe6">14141.01</div>
<div class="t ar" style="left:936px;top:622px;line-height:14px;color:#c3cfe6">0</div>
<div class="t ar" style="left:1016px;top:622px;line-height:14px;color:#c3cfe6">0.00 %</div>
<div class="t ar" style="left:1096px;top:622px;line-height:14px;color:#c3cfe6">0</div>
<div class="t ar" style="left:1176px;top:622px;line-height:14px;color:#c3cfe6">0.00 %</div>
<div class="t ar" style="left:1256px;top:622px;line-height:14px;color:#c3cfe6">0:00:25 | 5:58:13 | 12:48:05</div>
<div class="t ar" style="left:1446px;top:622px;line-height:14px;color:#c3cfe6">65.52 %</div>
<div class="t ar" style="left:426px;top:636px;line-height:14px;color:#c3cfe6">2023.01.05</div>
<div class="t ar" style="left:506px;top:636px;line-height:14px;color:#ff1a1a">1.03</div>
<div class="t ar" style="left:556px;top:636px;line-height:14px;color:#ff1a1a">0.02 | 0.21</div>
<div class="t ar" style="left:626px;top:636px;line-height:14px;color:#ff1a1a">24</div>
<div class="t ar" style="left:656px;top:636px;line-height:14px;color:#ff1a1a">147.17</div>
<div class="t ar" style="left:736px;top:636px;line-height:14px;color:#ff1a1a">1.06 %</div>
<div class="t ar" style="left:796px;top:636px;line-height:14px;color:#c3cfe6">0</div>
<div class="t ar" style="left:856px;top:636px;line-height:14px;color:#c3cfe6">14002.52</div>
<div class="t ar" style="left:936px;top:636px;line-height:14px;color:#c3cfe6">0</div>
<div class="t ar" style="left:1016px;top:636px;line-height:14px;color:#c3cfe6">0.00 %</div>
<div class="t ar" style="left:1096px;top:636px;line-height:14px;color:#c3cfe6">0</div>
<div class="t ar" style="left:1176px;top:636px;line-height:14px;color:#c3cfe6">0.00 %</div>
<div class="t ar" style="left:1256px;top:636px;line-height:14px;color:#c3cfe6">0:08:02 | 11:23:10 | 22:16:24</div>
<div class="t ar" style="left:1446px;top:636px;line-height:14px;color:#c3cfe6">62.50 %</div>
<div class="t ar" style="left:426px;top:650px;line-height:14px;color:#c3cfe6">2023.01.04</div>
<div class="t ar" style="left:506px;top:650px;line-height:14px;color:#ff1a1a">2.47</div>
<div class="t ar" style="left:556px;top:650px;line-height:14px;color:#ff1a1a">0.02 | 1.06</div>
<div class="t ar" style="left:626px;top:650px;line-height:14px;color:#ff1a1a">23</div>
<div class="t ar" style="left:656px;top:650px;line-height:14px;color:#ff1a1a">149.21</div>
<div class="t ar" style="left:736px;top:650px;line-height:14px;color:#ff1a1a">1.09 %</div>
<div class="t ar" style="left:796px;top:650px;line-height:14px;color:#c3cfe6">0</div>
<div class="t ar" style="left:856px;top:650px;line-height:14px;color:#c3cfe6">13855.35</div>
<div class="t ar" style="left:936px;top:650px;line-height:14px;color:#c3cfe6">0</div>
<div class="t ar" style="left:1016px;top:650px;line-height:14px;color:#c3cfe6">0.00 %</div>
<div class="t ar" style="left:1096px;top:650px;line-height:14px;color:#c3cfe6">0</div>
<div class="t ar" style="left:1176px;top:650px;line-height:14px;color:#c3cfe6">0.00 %</div>
<div class="t ar" style="left:1256px;top:650px;line-height:14px;color:#c3cfe6">0:00:04 | 13:18:18 | 23:51:30</div>
<div class="t ar" style="left:1446px;top:650px;line-height:14px;color:#c3cfe6">60.87 %</div>
<div class="t ar" style="left:426px;top:664px;line-height:14px;color:#c3cfe6">2023.01.03</div>
<div class="t ar" style="left:506px;top:664px;line-height:14px;color:#00e868">2.37</div>
<div class="t ar" style="left:556px;top:664px;line-height:14px;color:#00e868">0.02 | 0.37</div>
<div class="t ar" style="left:626px;top:664px;line-height:14px;color:#00e868">40</div>
<div class="t ar" style="left:656px;top:664px;line-height:14px;color:#00e868">-84.73</div>
<div class="t ar" style="left:736px;top:664px;line-height:14px;color:#00e868">-0.61 %</div>
<div class="t ar" style="left:796px;top:664px;line-height:14px;color:#c3cfe6">0</div>
<div class="t ar" style="left:856px;top:664px;line-height:14px;color:#c3cfe6">13706.14</div>
<div class="t ar" style="left:936px;top:664px;line-height:14px;color:#c3cfe6">0</div>
<div class="t ar" style="left:1016px;top:664px;line-height:14px;color:#c3cfe6">0.00 %</div>
<div class="t ar" style="left:1096px;top:664px;line-height:14px;color:#c3cfe6">0</div>
<div class="t ar" style="left:1176px;top:664px;line-height:14px;color:#c3cfe6">0.00 %</div>
<div class="t ar" style="left:1256px;top:664px;line-height:14px;color:#c3cfe6">0:00:01 | 23:32:04 | 89:51:19</div>
<div class="t ar" style="left:1446px;top:664px;line-height:14px;color:#c3cfe6">67.50 %</div>
<div class="t ar" style="left:426px;top:680px;line-height:15px;color:#c3cfe6;font-size:12px">合计</div>
<div class="t ar" style="left:506px;top:679px;line-height:14px;color:#ff1a1a">89.72</div>
<div class="t ar" style="left:656px;top:679px;line-height:14px;color:#ff1a1a">5711.31</div>
<div class="t ar" style="left:736px;top:679px;line-height:14px;color:#ff1a1a">41.41 %</div>
<div class="t ar" style="left:796px;top:679px;line-height:14px;color:#c3cfe6">0</div>
<div class="t ar" style="left:936px;top:679px;line-height:14px;color:#00e868">-475.37</div>
<div class="t ar" style="left:1016px;top:679px;line-height:14px;color:#00e868">-2.38 %</div>
<div class="t ar" style="left:1096px;top:679px;line-height:14px;color:#c3cfe6">0</div>
<div class="t ar" style="left:1176px;top:679px;line-height:14px;color:#c3cfe6">0 %</div>
<div class="b" style="left:322px;top:97px;width:1578px;height:700px;overflow:hidden;pointer-events:none"><div class="t wmd" style="left:-279px;top:3px;">eahub.cn</div><div class="t wmd" style="left:-29px;top:3px;">eahub.cn</div><div class="t wmd" style="left:221px;top:3px;">eahub.cn</div><div class="t wmd" style="left:471px;top:3px;">eahub.cn</div><div class="t wmd" style="left:721px;top:3px;">eahub.cn</div><div class="t wmd" style="left:971px;top:3px;">eahub.cn</div><div class="t wmd" style="left:1221px;top:3px;">eahub.cn</div><div class="t wmd" style="left:1471px;top:3px;">eahub.cn</div><div class="t wmd" style="left:-279px;top:253px;">eahub.cn</div><div class="t wmd" style="left:-29px;top:253px;">eahub.cn</div><div class="t wmd" style="left:221px;top:253px;">eahub.cn</div><div class="t wmd" style="left:471px;top:253px;">eahub.cn</div><div class="t wmd" style="left:721px;top:253px;">eahub.cn</div><div class="t wmd" style="left:971px;top:253px;">eahub.cn</div><div class="t wmd" style="left:1221px;top:253px;">eahub.cn</div><div class="t wmd" style="left:1471px;top:253px;">eahub.cn</div><div class="t wmd" style="left:-279px;top:504px;">eahub.cn</div><div class="t wmd" style="left:-29px;top:504px;">eahub.cn</div><div class="t wmd" style="left:221px;top:504px;">eahub.cn</div><div class="t wmd" style="left:471px;top:504px;">eahub.cn</div><div class="t wmd" style="left:721px;top:504px;">eahub.cn</div><div class="t wmd" style="left:971px;top:504px;">eahub.cn</div><div class="t wmd" style="left:1221px;top:504px;">eahub.cn</div><div class="t wmd" style="left:1471px;top:504px;">eahub.cn</div><div class="t wmd" style="left:-279px;top:754px;">eahub.cn</div><div class="t wmd" style="left:-29px;top:754px;">eahub.cn</div><div class="t wmd" style="left:221px;top:754px;">eahub.cn</div><div class="t wmd" style="left:471px;top:754px;">eahub.cn</div><div class="t wmd" style="left:721px;top:754px;">eahub.cn</div><div class="t wmd" style="left:971px;top:754px;">eahub.cn</div><div class="t wmd" style="left:1221px;top:754px;">eahub.cn</div><div class="t wmd" style="left:1471px;top:754px;">eahub.cn</div></div>
</div></body></html>
